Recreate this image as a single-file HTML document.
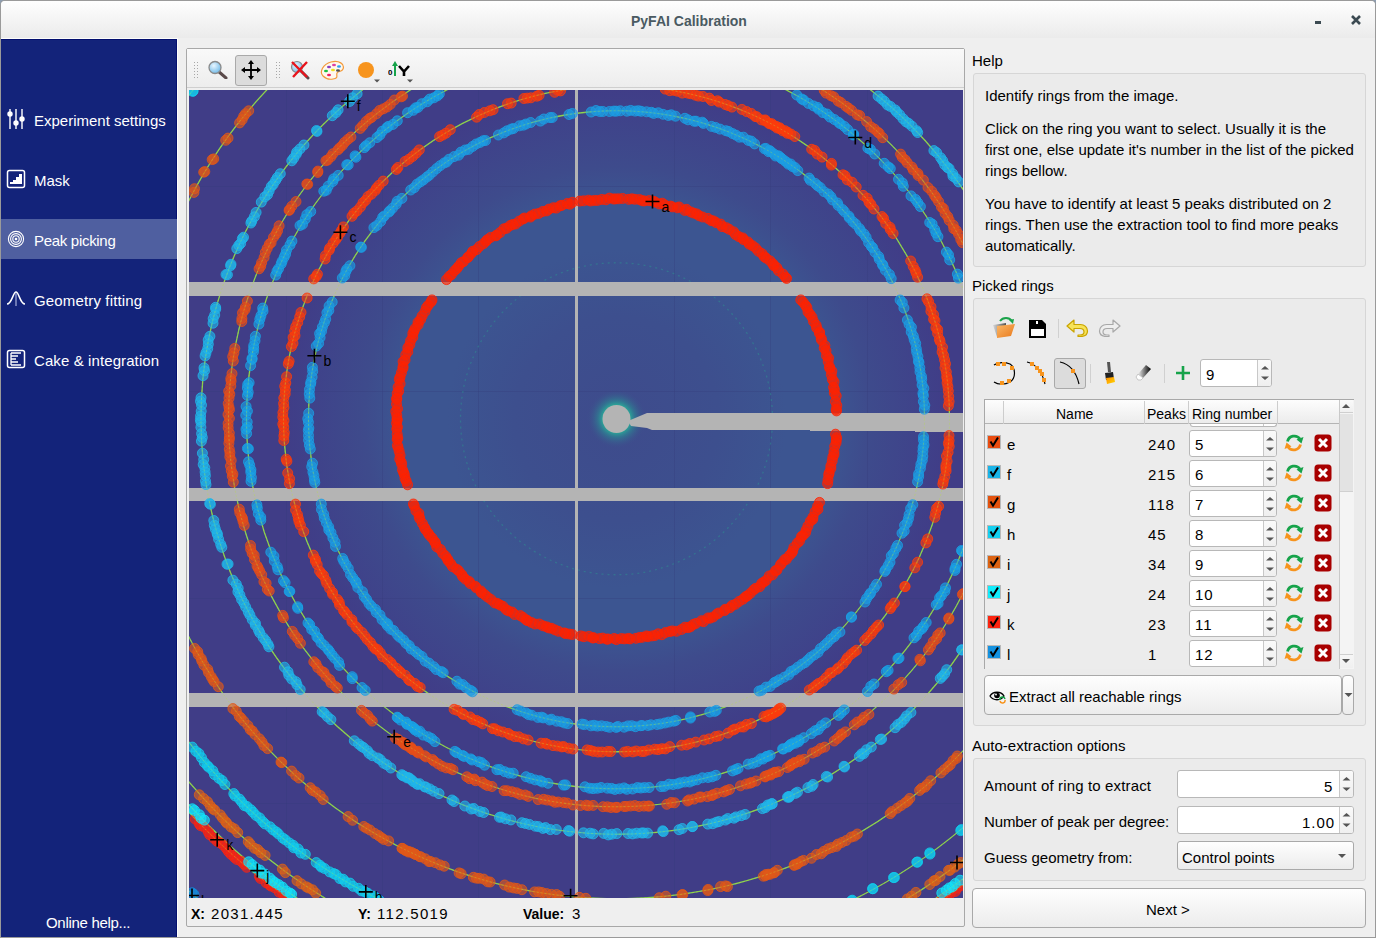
<!DOCTYPE html><html><head><meta charset="utf-8"><style>
*{box-sizing:border-box}
html,body{margin:0;padding:0}
body{width:1376px;height:938px;overflow:hidden;position:relative;background:#efefef;font-family:"Liberation Sans",sans-serif;}
.a{position:absolute}
.t{position:absolute;white-space:pre;font-family:"Liberation Sans",sans-serif}
.gb{position:absolute;background:#ebebeb;border:1px solid #d6d6d6;border-radius:3px}
.spin{position:absolute;background:#fff;border:1px solid #b8b8b8;border-radius:3px}
</style></head><body>
<div class="a" style="left:0;top:0;width:1376px;height:938px;background:#8e9db0"></div>
<div class="a" style="left:0;top:0;width:1376px;height:938px;background:#9a9a9a;border-radius:5px 5px 0 0"></div>
<div class="a" style="left:1px;top:1px;width:1374px;height:936px;background:#efefef;border-radius:4px 4px 0 0"></div>
<div class="a" style="left:1px;top:1px;width:1374px;height:37px;background:linear-gradient(#fefefe,#ebebeb);border-radius:4px 4px 0 0"></div>
<div class="t" style="left:631px;top:13px;font-size:14px;line-height:16px;color:#4a5a62;font-weight:bold">PyFAI Calibration</div>

<div class="a" style="left:1315px;top:21px;width:6px;height:3px;background:#3c4a52"></div>
<svg class="a" style="left:1350px;top:14px" width="12" height="12"><path d="M2 2L10 10M10 2L2 10" stroke="#3c4a52" stroke-width="2.6"/></svg>
<div class="a" style="left:1px;top:38px;width:177px;height:899px;background:#fdfdfb"></div>
<div class="a" style="left:1px;top:39px;width:176px;height:898px;background:#13237a;border-top:1px solid #030f6e;border-right:1px solid #030f6e"></div>
<div class="a" style="left:1px;top:219px;width:176px;height:40px;background:#4f5fa0"></div>
<div class="t" style="left:34px;top:112px;font-size:15px;line-height:17px;color:#ffffff;">Experiment settings</div>

<div class="t" style="left:34px;top:172px;font-size:15px;line-height:17px;color:#ffffff;">Mask</div>

<div class="t" style="left:34px;top:232px;font-size:15px;line-height:17px;color:#ffffff;letter-spacing:-0.3px">Peak picking</div>

<div class="t" style="left:34px;top:292px;font-size:15px;line-height:17px;color:#ffffff;letter-spacing:0.15px">Geometry fitting</div>

<div class="t" style="left:34px;top:352px;font-size:15px;line-height:17px;color:#ffffff;letter-spacing:0.1px">Cake &amp; integration</div>

<div class="t" style="left:46px;top:914px;font-size:15px;line-height:17px;color:#ffffff;letter-spacing:-0.3px">Online help...</div>

<svg class="a" style="left:6px;top:108px" width="20" height="22"><g stroke="#fff" stroke-width="1.4" fill="#fff"><path d="M4 1V21M10 1V21M16 1V21" fill="none"/><circle cx="4" cy="6" r="2"/><circle cx="10" cy="15" r="2"/><circle cx="16" cy="11" r="2"/></g></svg>
<svg class="a" style="left:6px;top:169px" width="20" height="20"><rect x="1.5" y="1.5" width="17" height="17" rx="2" fill="none" stroke="#fff" stroke-width="1.5"/><path d="M4 15H16V5H13V8H10V11H7V13H4Z" fill="#fff"/></svg>
<svg class="a" style="left:7px;top:230px" width="18" height="18"><g fill="none" stroke="#fff" stroke-width="1.1"><circle cx="9" cy="9" r="7.6"/><circle cx="9" cy="9" r="5.4"/><circle cx="9" cy="9" r="3.2"/></g><circle cx="9" cy="9" r="1.3" fill="#fff"/></svg>
<svg class="a" style="left:6px;top:290px" width="20" height="17"><path d="M1 14C6 14 7 2 10 2C13 2 14 14 19 14" fill="none" stroke="#fff" stroke-width="1.5"/><path d="M10 3V16" stroke="#8a94c8" stroke-width="1.5"/></svg>
<svg class="a" style="left:6px;top:349px" width="20" height="20"><rect x="1.5" y="1.5" width="17" height="17" rx="2" fill="none" stroke="#fff" stroke-width="1.5"/><path d="M5 4V16M5 4H15M5 7H12M5 10H10M5 13H12M5 16H15" stroke="#fff" stroke-width="1.3" fill="none"/></svg>
<div class="a" style="left:186px;top:48px;width:779px;height:879px;border:1px solid #a8a8a8;border-radius:2px;background:#efefef"></div>
<div class="a" style="left:187px;top:49px;width:777px;height:39px;background:linear-gradient(#f9f9f9,#ededed);border-bottom:1px solid #cfcfcf"></div>
<svg class="a" style="left:193px;top:61px" width="6" height="18"><g fill="#a8a8a8"><rect x="1" y="1" width="1" height="1"/><rect x="4" y="1" width="1" height="1"/><rect x="1" y="4" width="1" height="1"/><rect x="4" y="4" width="1" height="1"/><rect x="1" y="7" width="1" height="1"/><rect x="4" y="7" width="1" height="1"/><rect x="1" y="10" width="1" height="1"/><rect x="4" y="10" width="1" height="1"/><rect x="1" y="13" width="1" height="1"/><rect x="4" y="13" width="1" height="1"/><rect x="1" y="16" width="1" height="1"/><rect x="4" y="16" width="1" height="1"/></g></svg>
<svg class="a" style="left:275px;top:61px" width="6" height="18"><g fill="#a8a8a8"><rect x="1" y="1" width="1" height="1"/><rect x="4" y="1" width="1" height="1"/><rect x="1" y="4" width="1" height="1"/><rect x="4" y="4" width="1" height="1"/><rect x="1" y="7" width="1" height="1"/><rect x="4" y="7" width="1" height="1"/><rect x="1" y="10" width="1" height="1"/><rect x="4" y="10" width="1" height="1"/><rect x="1" y="13" width="1" height="1"/><rect x="4" y="13" width="1" height="1"/><rect x="1" y="16" width="1" height="1"/><rect x="4" y="16" width="1" height="1"/></g></svg>
<svg class="a" style="left:207px;top:60px" width="21" height="19" viewBox="0 0 21 19"><defs><radialGradient id="mg" cx="0.4" cy="0.35" r="0.7"><stop offset="0" stop-color="#e8f6ff"/><stop offset="1" stop-color="#6cb8e8"/></radialGradient></defs><path d="M11 11L19 18" stroke="#5a4a4a" stroke-width="3" stroke-linecap="round"/><circle cx="8" cy="7.5" r="6" fill="url(#mg)" stroke="#8a8a8a" stroke-width="1.3"/></svg>
<div class="a" style="left:235px;top:55px;width:32px;height:31px;background:#dcdcdc;border:1px solid #a9a9a9;border-radius:3px"></div>
<svg class="a" style="left:241px;top:60px" width="20" height="20" viewBox="0 0 20 20"><path d="M10 2V18M2 10H18" stroke="#000" stroke-width="1.8"/><path d="M10 0L13 4H7ZM10 20L13 16H7ZM0 10L4 7V13ZM20 10L16 7V13Z" fill="#000"/></svg>
<svg class="a" style="left:290px;top:60px" width="20" height="20" viewBox="0 0 20 20"><defs><radialGradient id="mg2" cx="0.4" cy="0.35" r="0.7"><stop offset="0" stop-color="#e8f6ff"/><stop offset="1" stop-color="#6cb8e8"/></radialGradient></defs><path d="M10 10L18 18" stroke="#5a4a4a" stroke-width="3" stroke-linecap="round"/><circle cx="7" cy="7" r="5.5" fill="url(#mg2)" stroke="#8a8a8a" stroke-width="1.2"/><path d="M2 2L17 17M17 2L3 17" stroke="#e8141c" stroke-width="2.4"/></svg>
<svg class="a" style="left:320px;top:60px" width="25" height="20" viewBox="0 0 25 20"><path d="M3 16C-1 12 3 4 11 2C19 0 25 4 23 9C22 12 18 11 17 13C16 16 19 18 13 19C8 20 5 18 3 16Z" fill="#fff8ee" stroke="#f39a3a" stroke-width="1.2"/><ellipse cx="9" cy="7" rx="2" ry="1.2" fill="#8a3fc0"/><ellipse cx="14" cy="5" rx="2" ry="1.2" fill="#e040a0"/><ellipse cx="19" cy="6.5" rx="2" ry="1.2" fill="#30a0f0"/><ellipse cx="13" cy="10" rx="2" ry="1.2" fill="#f0e020"/><ellipse cx="6" cy="11" rx="2" ry="1.2" fill="#20c040"/><ellipse cx="9" cy="15" rx="2" ry="1.2" fill="#f02060"/><ellipse cx="18" cy="10.5" rx="2" ry="1.2" fill="#505050"/></svg>
<svg class="a" style="left:357px;top:61px" width="25" height="23"><circle cx="9" cy="9" r="8" fill="#f7941d"/><path d="M17 18.5H23L20 21.5Z" fill="#555"/></svg>
<svg class="a" style="left:388px;top:61px" width="26" height="23" viewBox="0 0 26 23"><path d="M7 15V4" stroke="#16a34a" stroke-width="2"/><path d="M7 0L10 5H4Z" fill="#16a34a"/><text x="0" y="14" font-family="Liberation Sans" font-size="8" font-weight="bold" fill="#000">0</text><path d="M11 5L16 10.5L21 5M16 10.5V15" fill="none" stroke="#000" stroke-width="2.6"/><path d="M19 18.5H25L22 21.5Z" fill="#555"/></svg>
<svg class="a" style="left:189px;top:90px" width="774" height="808" viewBox="189 90 774 808"><defs><radialGradient id="cg" cx="616.5" cy="418.75" r="340" gradientUnits="userSpaceOnUse"><stop offset="0" stop-color="#3e4b8c"/><stop offset="0.3" stop-color="#3d4f8e"/><stop offset="0.5" stop-color="#3c5591"/><stop offset="0.64" stop-color="#3c5591"/><stop offset="0.74" stop-color="#3e4b8c"/><stop offset="0.9" stop-color="#3f428a"/><stop offset="1" stop-color="#403d87" stop-opacity="0"/></radialGradient><radialGradient id="bg2" cx="616.5" cy="418.75" r="30" gradientUnits="userSpaceOnUse"><stop offset="0.46" stop-color="#2aa898" stop-opacity="0.95"/><stop offset="0.62" stop-color="#2b8c94" stop-opacity="0.6"/><stop offset="1" stop-color="#3e4b8c" stop-opacity="0"/></radialGradient></defs><rect x="189" y="90" width="774" height="808" fill="#403d87"/><rect x="189" y="90" width="774" height="808" fill="url(#cg)"/><circle cx="616.5" cy="418.75" r="30" fill="url(#bg2)"/><g fill="#363a7c" fill-opacity="0.3"><rect x="286" y="90" width="1" height="808"/><rect x="382" y="90" width="1" height="808"/><rect x="478" y="90" width="1" height="808"/><rect x="674" y="90" width="1" height="808"/><rect x="770" y="90" width="1" height="808"/><rect x="867" y="90" width="1" height="808"/><rect x="189" y="186" width="774" height="1"/><rect x="189" y="391" width="774" height="1"/><rect x="189" y="598" width="774" height="1"/><rect x="189" y="803" width="774" height="1"/></g><circle cx="616.5" cy="418.75" r="156" fill="none" stroke="#2aa090" stroke-width="1.3" stroke-opacity="0.4" stroke-dasharray="2 4"/><circle cx="616.5" cy="418.75" r="308" fill="none" stroke="#8ede4a" stroke-width="1.3" stroke-opacity="0.9"/><circle cx="616.5" cy="418.75" r="333" fill="none" stroke="#8ede4a" stroke-width="1.3" stroke-opacity="0.9"/><circle cx="616.5" cy="418.75" r="370" fill="none" stroke="#8ede4a" stroke-width="1.3" stroke-opacity="0.9"/><circle cx="616.5" cy="418.75" r="388" fill="none" stroke="#8ede4a" stroke-width="1.3" stroke-opacity="0.9"/><circle cx="616.5" cy="418.75" r="415.5" fill="none" stroke="#8ede4a" stroke-width="1.3" stroke-opacity="0.9"/><circle cx="616.5" cy="418.75" r="480" fill="none" stroke="#8ede4a" stroke-width="1.3" stroke-opacity="0.9"/><circle cx="616.5" cy="418.75" r="536" fill="none" stroke="#8ede4a" stroke-width="1.3" stroke-opacity="0.9"/><circle cx="616.5" cy="418.75" r="561" fill="none" stroke="#8ede4a" stroke-width="1.3" stroke-opacity="0.9"/><circle cx="616.5" cy="418.75" r="576" fill="none" stroke="#8ede4a" stroke-width="1.3" stroke-opacity="0.9"/><circle cx="616.5" cy="418.75" r="581" fill="none" stroke="#8ede4a" stroke-width="1.3" stroke-opacity="0.9"/><circle cx="616.5" cy="418.75" r="637" fill="none" stroke="#8ede4a" stroke-width="1.3" stroke-opacity="0.9"/><rect x="575" y="90" width="3" height="808" fill="#b4b4b4"/><rect x="189" y="282" width="774" height="14" fill="#b4b4b4"/><rect x="189" y="488" width="774" height="13" fill="#b4b4b4"/><rect x="189" y="693" width="774" height="14" fill="#b4b4b4"/><circle cx="616.5" cy="419" r="14" fill="#b4b4b4"/><path d="M628 421L647 413H963V432H915V431H810V430H652L647 428L631 426Z" fill="#b4b4b4"/><g fill="#1290e0" fill-opacity="0.62" stroke="#1290e0" stroke-opacity="0.8" stroke-width="1"><circle cx="193.9" cy="894.4" r="5.0"/><circle cx="192.1" cy="892.8" r="5.0"/></g><g fill="#fa2412" fill-opacity="0.62" stroke="#fa2412" stroke-opacity="0.8" stroke-width="1"><circle cx="195.2" cy="819.0" r="5.0"/><circle cx="199.1" cy="823.6" r="5.0"/><circle cx="200.5" cy="825.6" r="5.0"/><circle cx="204.3" cy="827.2" r="5.0"/><circle cx="208.3" cy="831.9" r="5.0"/><circle cx="209.7" cy="834.7" r="5.0"/><circle cx="213.8" cy="838.3" r="5.0"/><circle cx="217.0" cy="841.3" r="5.0"/><circle cx="220.0" cy="842.8" r="5.0"/><circle cx="222.9" cy="844.9" r="5.0"/><circle cx="226.4" cy="848.6" r="5.0"/><circle cx="228.6" cy="851.8" r="5.0"/><circle cx="231.0" cy="854.4" r="5.0"/><circle cx="234.3" cy="857.3" r="5.0"/><circle cx="236.7" cy="859.4" r="5.0"/><circle cx="241.1" cy="861.4" r="5.0"/><circle cx="244.0" cy="864.3" r="5.0"/><circle cx="246.7" cy="867.3" r="5.0"/><circle cx="259.3" cy="876.1" r="5.0"/><circle cx="260.6" cy="878.5" r="5.0"/><circle cx="266.1" cy="882.7" r="5.0"/><circle cx="269.5" cy="885.0" r="5.0"/><circle cx="271.2" cy="886.1" r="5.0"/><circle cx="274.8" cy="887.8" r="5.0"/><circle cx="279.2" cy="892.2" r="5.0"/><circle cx="282.7" cy="893.6" r="5.0"/><circle cx="285.2" cy="896.7" r="5.0"/><circle cx="941.5" cy="900.6" r="5.0"/><circle cx="944.2" cy="898.2" r="5.0"/><circle cx="947.0" cy="896.0" r="5.0"/><circle cx="950.4" cy="893.6" r="5.0"/><circle cx="955.2" cy="891.5" r="5.0"/><circle cx="957.2" cy="888.3" r="5.0"/><circle cx="961.3" cy="885.3" r="5.0"/></g><g fill="#12e4fa" fill-opacity="0.62" stroke="#12e4fa" stroke-opacity="0.8" stroke-width="1"><circle cx="192.3" cy="808.8" r="5.0"/><circle cx="194.5" cy="810.4" r="5.0"/><circle cx="199.4" cy="814.7" r="5.0"/><circle cx="201.0" cy="818.2" r="5.0"/><circle cx="204.4" cy="820.1" r="5.0"/><circle cx="248.7" cy="861.8" r="5.0"/><circle cx="252.1" cy="864.6" r="5.0"/><circle cx="255.5" cy="867.7" r="5.0"/><circle cx="259.8" cy="870.1" r="5.0"/><circle cx="261.3" cy="873.1" r="5.0"/><circle cx="264.8" cy="874.0" r="5.0"/><circle cx="269.8" cy="878.1" r="5.0"/><circle cx="272.5" cy="880.8" r="5.0"/><circle cx="275.2" cy="882.7" r="5.0"/><circle cx="278.8" cy="884.7" r="5.0"/><circle cx="282.5" cy="887.1" r="5.0"/><circle cx="286.4" cy="891.0" r="5.0"/><circle cx="290.1" cy="893.1" r="5.0"/><circle cx="291.6" cy="894.2" r="5.0"/><circle cx="941.8" cy="893.0" r="5.0"/><circle cx="946.3" cy="890.2" r="5.0"/><circle cx="949.3" cy="887.9" r="5.0"/><circle cx="952.3" cy="886.8" r="5.0"/><circle cx="955.2" cy="883.6" r="5.0"/><circle cx="960.1" cy="880.2" r="5.0"/></g><g fill="#de6216" fill-opacity="0.62" stroke="#de6216" stroke-opacity="0.8" stroke-width="1"><circle cx="199.3" cy="794.8" r="5.0"/><circle cx="203.6" cy="798.6" r="5.0"/><circle cx="207.5" cy="801.8" r="5.0"/><circle cx="210.3" cy="805.9" r="5.0"/><circle cx="213.0" cy="809.0" r="5.0"/><circle cx="214.7" cy="810.1" r="5.0"/><circle cx="220.2" cy="814.8" r="5.0"/><circle cx="222.5" cy="818.0" r="5.0"/><circle cx="225.7" cy="821.8" r="5.0"/><circle cx="226.8" cy="823.2" r="5.0"/><circle cx="231.0" cy="827.0" r="5.0"/><circle cx="234.3" cy="828.8" r="5.0"/><circle cx="237.7" cy="832.6" r="5.0"/><circle cx="248.3" cy="841.7" r="5.0"/><circle cx="250.2" cy="844.0" r="5.0"/><circle cx="254.6" cy="848.3" r="5.0"/><circle cx="257.8" cy="849.6" r="5.0"/><circle cx="260.9" cy="852.8" r="5.0"/><circle cx="265.1" cy="855.4" r="5.0"/><circle cx="282.5" cy="869.1" r="5.0"/><circle cx="285.3" cy="872.6" r="5.0"/><circle cx="297.0" cy="880.7" r="5.0"/><circle cx="301.2" cy="883.8" r="5.0"/><circle cx="306.3" cy="886.8" r="5.0"/><circle cx="308.5" cy="888.0" r="5.0"/><circle cx="312.5" cy="889.8" r="5.0"/><circle cx="315.7" cy="893.2" r="5.0"/><circle cx="907.3" cy="899.0" r="5.0"/><circle cx="911.5" cy="896.2" r="5.0"/><circle cx="915.9" cy="892.4" r="5.0"/><circle cx="929.8" cy="884.5" r="5.0"/><circle cx="934.0" cy="880.8" r="5.0"/><circle cx="935.6" cy="880.4" r="5.0"/><circle cx="940.0" cy="876.6" r="5.0"/><circle cx="948.6" cy="870.3" r="5.0"/><circle cx="950.0" cy="870.3" r="5.0"/><circle cx="954.6" cy="867.1" r="5.0"/><circle cx="958.2" cy="864.1" r="5.0"/><circle cx="960.8" cy="862.5" r="5.0"/></g><g fill="#12cdee" fill-opacity="0.62" stroke="#12cdee" stroke-opacity="0.8" stroke-width="1"><circle cx="193.1" cy="90.7" r="5.0"/><circle cx="192.8" cy="91.4" r="5.0"/><circle cx="192.3" cy="747.1" r="5.0"/><circle cx="195.9" cy="751.3" r="5.0"/><circle cx="198.9" cy="753.5" r="5.0"/><circle cx="201.5" cy="757.7" r="5.0"/><circle cx="204.3" cy="762.5" r="5.0"/><circle cx="207.4" cy="765.8" r="5.0"/><circle cx="208.8" cy="767.3" r="5.0"/><circle cx="212.8" cy="770.7" r="5.0"/><circle cx="214.5" cy="774.6" r="5.0"/><circle cx="218.8" cy="778.2" r="5.0"/><circle cx="222.1" cy="780.5" r="5.0"/><circle cx="224.9" cy="784.5" r="5.0"/><circle cx="233.8" cy="793.6" r="5.0"/><circle cx="235.1" cy="795.9" r="5.0"/><circle cx="239.5" cy="799.1" r="5.0"/><circle cx="241.7" cy="802.0" r="5.0"/><circle cx="244.3" cy="805.6" r="5.0"/><circle cx="247.0" cy="806.5" r="5.0"/><circle cx="250.9" cy="809.8" r="5.0"/><circle cx="253.1" cy="812.3" r="5.0"/><circle cx="256.0" cy="815.5" r="5.0"/><circle cx="259.7" cy="818.0" r="5.0"/><circle cx="262.8" cy="821.7" r="5.0"/><circle cx="264.9" cy="823.9" r="5.0"/><circle cx="270.0" cy="826.8" r="5.0"/><circle cx="273.1" cy="829.9" r="5.0"/><circle cx="276.4" cy="832.0" r="5.0"/><circle cx="278.5" cy="834.0" r="5.0"/><circle cx="282.8" cy="838.1" r="5.0"/><circle cx="285.3" cy="839.8" r="5.0"/><circle cx="289.3" cy="842.9" r="5.0"/><circle cx="293.2" cy="845.3" r="5.0"/><circle cx="293.8" cy="847.8" r="5.0"/><circle cx="298.1" cy="849.0" r="5.0"/><circle cx="300.9" cy="853.0" r="5.0"/><circle cx="305.3" cy="854.3" r="5.0"/><circle cx="316.2" cy="862.6" r="5.0"/><circle cx="319.9" cy="865.3" r="5.0"/><circle cx="321.4" cy="867.1" r="5.0"/><circle cx="324.5" cy="868.5" r="5.0"/><circle cx="329.6" cy="871.9" r="5.0"/><circle cx="333.8" cy="873.6" r="5.0"/><circle cx="335.9" cy="874.5" r="5.0"/><circle cx="339.9" cy="878.6" r="5.0"/><circle cx="343.2" cy="879.2" r="5.0"/><circle cx="345.4" cy="881.9" r="5.0"/><circle cx="350.0" cy="883.1" r="5.0"/><circle cx="353.1" cy="886.3" r="5.0"/><circle cx="358.6" cy="888.3" r="5.0"/><circle cx="361.5" cy="890.9" r="5.0"/><circle cx="364.9" cy="891.8" r="5.0"/><circle cx="367.8" cy="893.3" r="5.0"/><circle cx="373.7" cy="896.1" r="5.0"/><circle cx="375.6" cy="897.7" r="5.0"/><circle cx="378.9" cy="899.9" r="5.0"/><circle cx="852.3" cy="900.2" r="5.0"/><circle cx="851.4" cy="900.9" r="5.0"/><circle cx="872.9" cy="888.7" r="5.0"/><circle cx="872.6" cy="888.7" r="5.0"/><circle cx="893.5" cy="877.6" r="5.0"/><circle cx="894.4" cy="877.5" r="5.0"/><circle cx="917.6" cy="862.0" r="5.0"/><circle cx="916.8" cy="862.2" r="5.0"/><circle cx="930.0" cy="854.1" r="5.0"/><circle cx="929.8" cy="852.9" r="5.0"/><circle cx="961.5" cy="829.6" r="5.0"/><circle cx="960.7" cy="830.6" r="5.0"/></g><g fill="#e05818" fill-opacity="0.62" stroke="#e05818" stroke-opacity="0.8" stroke-width="1"><circle cx="248.7" cy="110.8" r="5.0"/><circle cx="245.6" cy="113.7" r="5.0"/><circle cx="243.7" cy="116.2" r="5.0"/><circle cx="242.2" cy="119.6" r="5.0"/><circle cx="239.6" cy="122.9" r="5.0"/><circle cx="228.0" cy="138.1" r="5.0"/><circle cx="225.7" cy="140.3" r="5.0"/><circle cx="213.7" cy="158.9" r="5.0"/><circle cx="212.2" cy="159.6" r="5.0"/><circle cx="204.8" cy="171.6" r="5.0"/><circle cx="203.7" cy="172.2" r="5.0"/><circle cx="194.5" cy="188.7" r="5.0"/><circle cx="193.9" cy="192.4" r="5.0"/><circle cx="194.6" cy="648.4" r="5.0"/><circle cx="197.7" cy="651.7" r="5.0"/><circle cx="198.2" cy="654.6" r="5.0"/><circle cx="201.2" cy="658.6" r="5.0"/><circle cx="201.9" cy="661.1" r="5.0"/><circle cx="203.9" cy="665.1" r="5.0"/><circle cx="207.7" cy="669.3" r="5.0"/><circle cx="208.5" cy="672.4" r="5.0"/><circle cx="211.2" cy="676.7" r="5.0"/><circle cx="212.8" cy="679.5" r="5.0"/><circle cx="214.1" cy="681.6" r="5.0"/><circle cx="218.3" cy="686.7" r="5.0"/><circle cx="232.9" cy="708.6" r="5.0"/><circle cx="236.3" cy="711.2" r="5.0"/><circle cx="239.3" cy="716.5" r="5.0"/><circle cx="241.0" cy="718.0" r="5.0"/><circle cx="243.8" cy="721.2" r="5.0"/><circle cx="247.9" cy="725.5" r="5.0"/><circle cx="250.3" cy="729.7" r="5.0"/><circle cx="252.3" cy="730.9" r="5.0"/><circle cx="255.0" cy="734.5" r="5.0"/><circle cx="259.4" cy="738.8" r="5.0"/><circle cx="262.0" cy="742.0" r="5.0"/><circle cx="263.9" cy="745.6" r="5.0"/><circle cx="267.6" cy="748.6" r="5.0"/><circle cx="281.0" cy="762.1" r="5.0"/><circle cx="281.8" cy="762.6" r="5.0"/><circle cx="291.6" cy="771.1" r="5.0"/><circle cx="295.7" cy="775.5" r="5.0"/><circle cx="299.0" cy="778.0" r="5.0"/><circle cx="310.2" cy="787.7" r="5.0"/><circle cx="312.4" cy="790.5" r="5.0"/><circle cx="315.6" cy="791.9" r="5.0"/><circle cx="320.2" cy="795.5" r="5.0"/><circle cx="323.2" cy="799.5" r="5.0"/><circle cx="348.1" cy="816.6" r="5.0"/><circle cx="352.6" cy="820.3" r="5.0"/><circle cx="363.8" cy="826.5" r="5.0"/><circle cx="366.5" cy="828.2" r="5.0"/><circle cx="370.0" cy="830.0" r="5.0"/><circle cx="374.9" cy="833.5" r="5.0"/><circle cx="378.6" cy="835.6" r="5.0"/><circle cx="381.4" cy="837.7" r="5.0"/><circle cx="383.8" cy="839.4" r="5.0"/><circle cx="388.6" cy="840.9" r="5.0"/><circle cx="402.2" cy="848.5" r="5.0"/><circle cx="405.7" cy="850.7" r="5.0"/><circle cx="408.3" cy="851.3" r="5.0"/><circle cx="411.3" cy="852.2" r="5.0"/><circle cx="415.1" cy="854.2" r="5.0"/><circle cx="419.4" cy="856.5" r="5.0"/><circle cx="402.1" cy="848.3" r="5.0"/><circle cx="404.4" cy="849.7" r="5.0"/><circle cx="408.6" cy="852.1" r="5.0"/><circle cx="413.7" cy="853.6" r="5.0"/><circle cx="415.6" cy="854.5" r="5.0"/><circle cx="420.9" cy="856.9" r="5.0"/><circle cx="425.3" cy="858.8" r="5.0"/><circle cx="429.0" cy="861.6" r="5.0"/><circle cx="430.4" cy="861.4" r="5.0"/><circle cx="435.3" cy="862.7" r="5.0"/><circle cx="440.0" cy="864.9" r="5.0"/><circle cx="444.2" cy="866.2" r="5.0"/><circle cx="459.1" cy="872.9" r="5.0"/><circle cx="461.2" cy="873.7" r="5.0"/><circle cx="473.4" cy="877.3" r="5.0"/><circle cx="476.5" cy="878.2" r="5.0"/><circle cx="479.2" cy="878.3" r="5.0"/><circle cx="483.7" cy="879.1" r="5.0"/><circle cx="487.6" cy="881.8" r="5.0"/><circle cx="490.1" cy="882.0" r="5.0"/><circle cx="504.6" cy="885.0" r="5.0"/><circle cx="509.3" cy="887.1" r="5.0"/><circle cx="513.4" cy="887.9" r="5.0"/><circle cx="516.9" cy="888.4" r="5.0"/><circle cx="521.9" cy="889.7" r="5.0"/><circle cx="534.6" cy="891.9" r="5.0"/><circle cx="538.6" cy="891.9" r="5.0"/><circle cx="541.9" cy="892.5" r="5.0"/><circle cx="546.5" cy="893.6" r="5.0"/><circle cx="551.4" cy="894.4" r="5.0"/><circle cx="556.6" cy="894.5" r="5.0"/><circle cx="559.4" cy="896.1" r="5.0"/><circle cx="579.3" cy="897.3" r="5.0"/><circle cx="585.8" cy="898.3" r="5.0"/><circle cx="659.3" cy="897.7" r="5.0"/><circle cx="665.8" cy="896.2" r="5.0"/><circle cx="682.0" cy="894.8" r="5.0"/><circle cx="682.8" cy="894.6" r="5.0"/><circle cx="708.1" cy="889.4" r="5.0"/><circle cx="707.8" cy="890.6" r="5.0"/><circle cx="720.6" cy="886.6" r="5.0"/><circle cx="725.5" cy="885.9" r="5.0"/><circle cx="727.4" cy="886.6" r="5.0"/><circle cx="763.4" cy="876.2" r="5.0"/><circle cx="765.4" cy="875.7" r="5.0"/><circle cx="770.2" cy="874.3" r="5.0"/><circle cx="774.1" cy="872.8" r="5.0"/><circle cx="794.6" cy="864.7" r="5.0"/><circle cx="797.2" cy="864.1" r="5.0"/><circle cx="765.9" cy="874.5" r="5.0"/><circle cx="768.3" cy="874.2" r="5.0"/><circle cx="774.0" cy="872.7" r="5.0"/><circle cx="777.3" cy="870.3" r="5.0"/><circle cx="794.1" cy="865.4" r="5.0"/><circle cx="797.5" cy="863.8" r="5.0"/><circle cx="801.0" cy="861.5" r="5.0"/><circle cx="803.5" cy="860.4" r="5.0"/><circle cx="811.4" cy="858.3" r="5.0"/><circle cx="816.5" cy="854.5" r="5.0"/><circle cx="821.2" cy="853.8" r="5.0"/><circle cx="823.9" cy="851.3" r="5.0"/><circle cx="828.1" cy="848.8" r="5.0"/><circle cx="831.8" cy="847.6" r="5.0"/><circle cx="836.4" cy="846.4" r="5.0"/><circle cx="837.8" cy="844.1" r="5.0"/><circle cx="842.0" cy="842.4" r="5.0"/><circle cx="846.0" cy="840.6" r="5.0"/><circle cx="851.1" cy="837.1" r="5.0"/><circle cx="854.4" cy="836.2" r="5.0"/><circle cx="857.4" cy="834.0" r="5.0"/><circle cx="890.2" cy="813.6" r="5.0"/><circle cx="891.9" cy="811.6" r="5.0"/><circle cx="897.2" cy="808.2" r="5.0"/><circle cx="901.0" cy="805.6" r="5.0"/><circle cx="905.3" cy="802.8" r="5.0"/><circle cx="907.6" cy="801.1" r="5.0"/><circle cx="909.8" cy="798.4" r="5.0"/><circle cx="919.6" cy="790.4" r="5.0"/><circle cx="921.6" cy="788.3" r="5.0"/><circle cx="925.0" cy="787.1" r="5.0"/><circle cx="927.1" cy="784.5" r="5.0"/><circle cx="930.7" cy="780.7" r="5.0"/><circle cx="940.9" cy="772.9" r="5.0"/><circle cx="944.3" cy="769.7" r="5.0"/><circle cx="948.0" cy="766.6" r="5.0"/><circle cx="950.2" cy="764.9" r="5.0"/><circle cx="953.0" cy="760.6" r="5.0"/><circle cx="956.4" cy="758.4" r="5.0"/><circle cx="957.3" cy="756.0" r="5.0"/></g><g fill="#20b6ea" fill-opacity="0.62" stroke="#20b6ea" stroke-opacity="0.8" stroke-width="1"><circle cx="357.1" cy="93.8" r="5.0"/><circle cx="352.5" cy="97.8" r="5.0"/><circle cx="349.5" cy="101.5" r="5.0"/><circle cx="338.1" cy="109.8" r="5.0"/><circle cx="336.0" cy="112.6" r="5.0"/><circle cx="332.3" cy="115.7" r="5.0"/><circle cx="316.5" cy="130.5" r="5.0"/><circle cx="317.0" cy="131.4" r="5.0"/><circle cx="303.9" cy="145.0" r="5.0"/><circle cx="299.9" cy="149.0" r="5.0"/><circle cx="296.7" cy="152.1" r="5.0"/><circle cx="296.3" cy="154.2" r="5.0"/><circle cx="293.7" cy="158.1" r="5.0"/><circle cx="291.8" cy="160.8" r="5.0"/><circle cx="280.3" cy="173.7" r="5.0"/><circle cx="277.3" cy="177.6" r="5.0"/><circle cx="275.6" cy="180.5" r="5.0"/><circle cx="273.2" cy="184.4" r="5.0"/><circle cx="271.3" cy="186.4" r="5.0"/><circle cx="269.1" cy="190.9" r="5.0"/><circle cx="267.5" cy="194.7" r="5.0"/><circle cx="264.8" cy="196.9" r="5.0"/><circle cx="261.3" cy="202.1" r="5.0"/><circle cx="256.1" cy="212.4" r="5.0"/><circle cx="254.4" cy="216.8" r="5.0"/><circle cx="251.7" cy="221.1" r="5.0"/><circle cx="250.9" cy="223.0" r="5.0"/><circle cx="243.5" cy="237.2" r="5.0"/><circle cx="242.3" cy="238.7" r="5.0"/><circle cx="240.6" cy="243.5" r="5.0"/><circle cx="238.8" cy="245.4" r="5.0"/><circle cx="236.8" cy="248.6" r="5.0"/><circle cx="230.6" cy="265.7" r="5.0"/><circle cx="231.0" cy="264.3" r="5.0"/><circle cx="226.0" cy="274.5" r="5.0"/><circle cx="227.4" cy="274.8" r="5.0"/><circle cx="878.1" cy="96.1" r="5.0"/><circle cx="881.6" cy="99.0" r="5.0"/><circle cx="884.4" cy="101.3" r="5.0"/><circle cx="887.5" cy="105.0" r="5.0"/><circle cx="890.4" cy="106.4" r="5.0"/><circle cx="895.2" cy="109.9" r="5.0"/><circle cx="896.6" cy="112.0" r="5.0"/><circle cx="899.6" cy="114.7" r="5.0"/><circle cx="903.0" cy="118.7" r="5.0"/><circle cx="906.0" cy="121.8" r="5.0"/><circle cx="908.7" cy="123.4" r="5.0"/><circle cx="912.0" cy="126.3" r="5.0"/><circle cx="916.6" cy="130.7" r="5.0"/><circle cx="917.7" cy="132.5" r="5.0"/><circle cx="933.9" cy="150.6" r="5.0"/><circle cx="936.6" cy="152.6" r="5.0"/><circle cx="940.7" cy="157.8" r="5.0"/><circle cx="942.7" cy="160.7" r="5.0"/><circle cx="944.7" cy="164.8" r="5.0"/><circle cx="947.5" cy="167.6" r="5.0"/><circle cx="949.1" cy="168.5" r="5.0"/><circle cx="952.7" cy="173.7" r="5.0"/><circle cx="953.0" cy="176.3" r="5.0"/><circle cx="956.0" cy="178.4" r="5.0"/><circle cx="958.7" cy="181.9" r="5.0"/><circle cx="215.6" cy="307.3" r="5.0"/><circle cx="215.7" cy="309.1" r="5.0"/><circle cx="214.7" cy="315.0" r="5.0"/><circle cx="213.2" cy="318.6" r="5.0"/><circle cx="213.0" cy="323.2" r="5.0"/><circle cx="209.9" cy="336.3" r="5.0"/><circle cx="208.2" cy="340.0" r="5.0"/><circle cx="208.3" cy="344.2" r="5.0"/><circle cx="207.7" cy="348.7" r="5.0"/><circle cx="206.0" cy="352.8" r="5.0"/><circle cx="205.1" cy="355.9" r="5.0"/><circle cx="204.0" cy="367.9" r="5.0"/><circle cx="204.5" cy="370.8" r="5.0"/><circle cx="203.0" cy="375.7" r="5.0"/><circle cx="201.0" cy="397.8" r="5.0"/><circle cx="200.5" cy="401.2" r="5.0"/><circle cx="201.5" cy="405.1" r="5.0"/><circle cx="201.2" cy="411.2" r="5.0"/><circle cx="200.6" cy="416.0" r="5.0"/><circle cx="200.4" cy="419.7" r="5.0"/><circle cx="200.8" cy="421.9" r="5.0"/><circle cx="200.9" cy="427.3" r="5.0"/><circle cx="201.6" cy="433.6" r="5.0"/><circle cx="202.3" cy="437.5" r="5.0"/><circle cx="201.4" cy="441.1" r="5.0"/><circle cx="202.4" cy="453.2" r="5.0"/><circle cx="203.7" cy="459.5" r="5.0"/><circle cx="203.2" cy="464.5" r="5.0"/><circle cx="204.8" cy="467.7" r="5.0"/><circle cx="205.1" cy="472.0" r="5.0"/><circle cx="205.4" cy="475.6" r="5.0"/><circle cx="205.5" cy="481.1" r="5.0"/><circle cx="206.0" cy="484.6" r="5.0"/><circle cx="209.7" cy="503.5" r="5.0"/><circle cx="210.4" cy="504.3" r="5.0"/><circle cx="213.8" cy="520.5" r="5.0"/><circle cx="214.3" cy="525.3" r="5.0"/><circle cx="215.3" cy="528.9" r="5.0"/><circle cx="217.0" cy="533.0" r="5.0"/><circle cx="217.5" cy="534.8" r="5.0"/><circle cx="218.6" cy="539.2" r="5.0"/><circle cx="220.7" cy="544.3" r="5.0"/><circle cx="221.8" cy="547.3" r="5.0"/><circle cx="227.0" cy="564.2" r="5.0"/><circle cx="228.1" cy="564.0" r="5.0"/><circle cx="232.9" cy="580.2" r="5.0"/><circle cx="236.3" cy="584.2" r="5.0"/><circle cx="238.2" cy="588.4" r="5.0"/><circle cx="237.9" cy="591.8" r="5.0"/><circle cx="239.9" cy="595.0" r="5.0"/><circle cx="241.6" cy="599.5" r="5.0"/><circle cx="243.9" cy="603.1" r="5.0"/><circle cx="245.7" cy="607.1" r="5.0"/><circle cx="248.3" cy="611.9" r="5.0"/><circle cx="249.9" cy="615.0" r="5.0"/><circle cx="252.3" cy="619.8" r="5.0"/><circle cx="255.4" cy="623.2" r="5.0"/><circle cx="255.3" cy="625.1" r="5.0"/><circle cx="258.5" cy="630.1" r="5.0"/><circle cx="259.8" cy="632.9" r="5.0"/><circle cx="263.2" cy="637.7" r="5.0"/><circle cx="265.6" cy="640.6" r="5.0"/><circle cx="267.9" cy="644.2" r="5.0"/><circle cx="268.9" cy="646.8" r="5.0"/><circle cx="284.5" cy="667.2" r="5.0"/><circle cx="288.0" cy="671.8" r="5.0"/><circle cx="288.8" cy="675.2" r="5.0"/><circle cx="291.7" cy="679.1" r="5.0"/><circle cx="295.9" cy="681.7" r="5.0"/><circle cx="296.9" cy="684.6" r="5.0"/><circle cx="300.2" cy="689.5" r="5.0"/><circle cx="961.9" cy="649.9" r="5.0"/><circle cx="961.7" cy="649.9" r="5.0"/><circle cx="946.7" cy="669.7" r="5.0"/><circle cx="944.6" cy="673.9" r="5.0"/><circle cx="942.2" cy="676.5" r="5.0"/><circle cx="940.3" cy="678.4" r="5.0"/><circle cx="322.2" cy="711.8" r="5.0"/><circle cx="324.0" cy="713.0" r="5.0"/><circle cx="327.3" cy="716.6" r="5.0"/><circle cx="330.9" cy="719.6" r="5.0"/><circle cx="354.3" cy="740.8" r="5.0"/><circle cx="358.6" cy="744.0" r="5.0"/><circle cx="361.4" cy="746.3" r="5.0"/><circle cx="363.6" cy="747.6" r="5.0"/><circle cx="367.5" cy="750.8" r="5.0"/><circle cx="369.1" cy="753.5" r="5.0"/><circle cx="372.3" cy="755.7" r="5.0"/><circle cx="377.8" cy="758.0" r="5.0"/><circle cx="380.2" cy="759.5" r="5.0"/><circle cx="383.7" cy="763.3" r="5.0"/><circle cx="386.6" cy="764.7" r="5.0"/><circle cx="390.8" cy="768.0" r="5.0"/><circle cx="402.7" cy="775.7" r="5.0"/><circle cx="407.1" cy="777.9" r="5.0"/><circle cx="409.5" cy="778.2" r="5.0"/><circle cx="413.3" cy="781.7" r="5.0"/><circle cx="419.6" cy="783.7" r="5.0"/><circle cx="401.8" cy="774.7" r="5.0"/><circle cx="404.2" cy="776.1" r="5.0"/><circle cx="408.1" cy="777.6" r="5.0"/><circle cx="411.7" cy="780.0" r="5.0"/><circle cx="416.4" cy="783.7" r="5.0"/><circle cx="417.9" cy="784.5" r="5.0"/><circle cx="424.5" cy="786.8" r="5.0"/><circle cx="425.8" cy="787.1" r="5.0"/><circle cx="429.7" cy="788.9" r="5.0"/><circle cx="433.7" cy="791.2" r="5.0"/><circle cx="439.0" cy="793.6" r="5.0"/><circle cx="454.1" cy="801.5" r="5.0"/><circle cx="452.0" cy="800.0" r="5.0"/><circle cx="464.8" cy="806.0" r="5.0"/><circle cx="471.2" cy="809.0" r="5.0"/><circle cx="473.8" cy="808.5" r="5.0"/><circle cx="479.9" cy="811.5" r="5.0"/><circle cx="483.7" cy="812.5" r="5.0"/><circle cx="499.5" cy="817.3" r="5.0"/><circle cx="501.2" cy="817.0" r="5.0"/><circle cx="505.5" cy="818.8" r="5.0"/><circle cx="510.9" cy="819.9" r="5.0"/><circle cx="521.9" cy="822.7" r="5.0"/><circle cx="525.3" cy="823.5" r="5.0"/><circle cx="529.4" cy="824.4" r="5.0"/><circle cx="535.3" cy="826.2" r="5.0"/><circle cx="538.4" cy="826.6" r="5.0"/><circle cx="542.9" cy="828.4" r="5.0"/><circle cx="545.5" cy="827.6" r="5.0"/><circle cx="550.3" cy="829.6" r="5.0"/><circle cx="556.3" cy="829.5" r="5.0"/><circle cx="569.7" cy="831.2" r="5.0"/><circle cx="568.5" cy="830.6" r="5.0"/><circle cx="583.5" cy="832.8" r="5.0"/><circle cx="590.1" cy="833.2" r="5.0"/><circle cx="593.2" cy="833.9" r="5.0"/><circle cx="603.7" cy="833.4" r="5.0"/><circle cx="608.3" cy="834.9" r="5.0"/><circle cx="611.8" cy="834.2" r="5.0"/><circle cx="616.8" cy="833.6" r="5.0"/><circle cx="628.0" cy="833.5" r="5.0"/><circle cx="632.6" cy="833.9" r="5.0"/><circle cx="636.6" cy="833.2" r="5.0"/><circle cx="641.6" cy="833.0" r="5.0"/><circle cx="643.5" cy="832.9" r="5.0"/><circle cx="647.6" cy="833.1" r="5.0"/><circle cx="662.7" cy="830.8" r="5.0"/><circle cx="663.3" cy="831.6" r="5.0"/><circle cx="679.0" cy="829.7" r="5.0"/><circle cx="682.3" cy="828.5" r="5.0"/><circle cx="692.6" cy="826.6" r="5.0"/><circle cx="692.1" cy="826.5" r="5.0"/><circle cx="707.8" cy="824.1" r="5.0"/><circle cx="712.8" cy="823.7" r="5.0"/><circle cx="716.4" cy="822.2" r="5.0"/><circle cx="719.0" cy="821.6" r="5.0"/><circle cx="725.4" cy="820.1" r="5.0"/><circle cx="727.8" cy="818.6" r="5.0"/><circle cx="733.9" cy="818.2" r="5.0"/><circle cx="736.0" cy="816.9" r="5.0"/><circle cx="741.3" cy="815.7" r="5.0"/><circle cx="745.1" cy="814.4" r="5.0"/><circle cx="762.4" cy="808.6" r="5.0"/><circle cx="765.3" cy="807.6" r="5.0"/><circle cx="769.8" cy="804.7" r="5.0"/><circle cx="771.9" cy="803.6" r="5.0"/><circle cx="789.3" cy="797.0" r="5.0"/><circle cx="789.0" cy="796.4" r="5.0"/><circle cx="797.4" cy="792.2" r="5.0"/><circle cx="795.4" cy="793.4" r="5.0"/><circle cx="767.6" cy="805.0" r="5.0"/><circle cx="772.2" cy="803.9" r="5.0"/><circle cx="787.5" cy="797.1" r="5.0"/><circle cx="788.5" cy="797.2" r="5.0"/><circle cx="807.9" cy="787.6" r="5.0"/><circle cx="811.8" cy="786.3" r="5.0"/><circle cx="813.1" cy="784.5" r="5.0"/><circle cx="826.3" cy="776.5" r="5.0"/><circle cx="827.6" cy="777.0" r="5.0"/><circle cx="844.0" cy="766.3" r="5.0"/><circle cx="844.5" cy="767.0" r="5.0"/><circle cx="859.4" cy="756.4" r="5.0"/><circle cx="861.8" cy="753.8" r="5.0"/><circle cx="863.6" cy="753.8" r="5.0"/><circle cx="866.5" cy="749.8" r="5.0"/><circle cx="871.3" cy="747.1" r="5.0"/><circle cx="880.3" cy="739.5" r="5.0"/><circle cx="881.6" cy="739.0" r="5.0"/><circle cx="895.1" cy="727.7" r="5.0"/><circle cx="897.9" cy="724.5" r="5.0"/><circle cx="901.3" cy="722.4" r="5.0"/><circle cx="904.4" cy="719.1" r="5.0"/><circle cx="906.6" cy="715.9" r="5.0"/><circle cx="910.9" cy="712.5" r="5.0"/></g><g fill="#e64e18" fill-opacity="0.62" stroke="#e64e18" stroke-opacity="0.8" stroke-width="1"><circle cx="387.0" cy="107.0" r="5.0"/><circle cx="383.5" cy="108.8" r="5.0"/><circle cx="379.7" cy="110.4" r="5.0"/><circle cx="376.5" cy="113.8" r="5.0"/><circle cx="371.6" cy="117.4" r="5.0"/><circle cx="369.6" cy="118.5" r="5.0"/><circle cx="366.3" cy="121.3" r="5.0"/><circle cx="362.7" cy="125.6" r="5.0"/><circle cx="360.2" cy="128.4" r="5.0"/><circle cx="350.9" cy="137.0" r="5.0"/><circle cx="347.9" cy="139.4" r="5.0"/><circle cx="344.6" cy="142.4" r="5.0"/><circle cx="342.3" cy="145.5" r="5.0"/><circle cx="339.7" cy="147.9" r="5.0"/><circle cx="338.0" cy="149.8" r="5.0"/><circle cx="332.9" cy="153.7" r="5.0"/><circle cx="331.0" cy="156.7" r="5.0"/><circle cx="327.6" cy="160.1" r="5.0"/><circle cx="325.9" cy="160.7" r="5.0"/><circle cx="317.9" cy="171.1" r="5.0"/><circle cx="317.7" cy="172.4" r="5.0"/><circle cx="307.7" cy="184.3" r="5.0"/><circle cx="306.8" cy="184.0" r="5.0"/><circle cx="296.0" cy="201.6" r="5.0"/><circle cx="291.8" cy="206.2" r="5.0"/><circle cx="289.6" cy="209.7" r="5.0"/><circle cx="289.1" cy="210.4" r="5.0"/><circle cx="279.1" cy="225.8" r="5.0"/><circle cx="277.5" cy="230.9" r="5.0"/><circle cx="276.1" cy="233.7" r="5.0"/><circle cx="273.5" cy="237.2" r="5.0"/><circle cx="271.1" cy="242.7" r="5.0"/><circle cx="269.4" cy="244.1" r="5.0"/><circle cx="267.2" cy="248.4" r="5.0"/><circle cx="265.3" cy="252.5" r="5.0"/><circle cx="264.1" cy="257.5" r="5.0"/><circle cx="261.6" cy="262.7" r="5.0"/><circle cx="260.7" cy="266.2" r="5.0"/><circle cx="259.1" cy="268.8" r="5.0"/><circle cx="390.3" cy="104.4" r="5.0"/><circle cx="394.4" cy="100.0" r="5.0"/><circle cx="401.2" cy="96.8" r="5.0"/><circle cx="402.5" cy="96.1" r="5.0"/><circle cx="824.2" cy="90.4" r="5.0"/><circle cx="826.0" cy="93.1" r="5.0"/><circle cx="831.0" cy="95.7" r="5.0"/><circle cx="833.7" cy="96.9" r="5.0"/><circle cx="838.2" cy="101.1" r="5.0"/><circle cx="840.9" cy="102.5" r="5.0"/><circle cx="845.9" cy="106.3" r="5.0"/><circle cx="848.5" cy="108.1" r="5.0"/><circle cx="851.6" cy="110.4" r="5.0"/><circle cx="859.7" cy="115.6" r="5.0"/><circle cx="857.2" cy="114.8" r="5.0"/><circle cx="866.6" cy="121.6" r="5.0"/><circle cx="870.7" cy="126.8" r="5.0"/><circle cx="874.2" cy="128.9" r="5.0"/><circle cx="877.6" cy="132.0" r="5.0"/><circle cx="879.2" cy="133.3" r="5.0"/><circle cx="882.7" cy="137.7" r="5.0"/><circle cx="900.6" cy="154.1" r="5.0"/><circle cx="902.2" cy="157.3" r="5.0"/><circle cx="905.2" cy="159.9" r="5.0"/><circle cx="907.3" cy="162.9" r="5.0"/><circle cx="911.9" cy="167.1" r="5.0"/><circle cx="913.2" cy="169.9" r="5.0"/><circle cx="917.9" cy="173.5" r="5.0"/><circle cx="918.1" cy="175.5" r="5.0"/><circle cx="923.4" cy="180.1" r="5.0"/><circle cx="928.0" cy="187.5" r="5.0"/><circle cx="931.8" cy="191.3" r="5.0"/><circle cx="934.6" cy="195.4" r="5.0"/><circle cx="936.2" cy="197.8" r="5.0"/><circle cx="938.6" cy="201.6" r="5.0"/><circle cx="941.5" cy="207.1" r="5.0"/><circle cx="943.4" cy="208.6" r="5.0"/><circle cx="945.1" cy="213.4" r="5.0"/><circle cx="947.8" cy="216.7" r="5.0"/><circle cx="949.2" cy="220.4" r="5.0"/><circle cx="953.2" cy="225.2" r="5.0"/><circle cx="953.8" cy="228.7" r="5.0"/><circle cx="956.3" cy="230.4" r="5.0"/><circle cx="958.6" cy="234.3" r="5.0"/><circle cx="960.8" cy="239.5" r="5.0"/><circle cx="962.5" cy="242.6" r="5.0"/><circle cx="247.4" cy="301.1" r="5.0"/><circle cx="245.4" cy="307.2" r="5.0"/><circle cx="244.9" cy="309.8" r="5.0"/><circle cx="242.5" cy="312.9" r="5.0"/><circle cx="241.9" cy="318.5" r="5.0"/><circle cx="241.8" cy="321.5" r="5.0"/><circle cx="234.8" cy="348.4" r="5.0"/><circle cx="233.9" cy="352.8" r="5.0"/><circle cx="232.7" cy="356.6" r="5.0"/><circle cx="233.3" cy="361.0" r="5.0"/><circle cx="232.0" cy="373.6" r="5.0"/><circle cx="230.8" cy="378.6" r="5.0"/><circle cx="231.1" cy="381.1" r="5.0"/><circle cx="230.8" cy="386.0" r="5.0"/><circle cx="228.7" cy="391.2" r="5.0"/><circle cx="229.8" cy="394.1" r="5.0"/><circle cx="229.0" cy="398.1" r="5.0"/><circle cx="228.2" cy="403.6" r="5.0"/><circle cx="229.0" cy="407.4" r="5.0"/><circle cx="229.4" cy="409.8" r="5.0"/><circle cx="228.0" cy="414.5" r="5.0"/><circle cx="229.4" cy="418.3" r="5.0"/><circle cx="228.1" cy="423.6" r="5.0"/><circle cx="228.2" cy="427.8" r="5.0"/><circle cx="229.3" cy="433.0" r="5.0"/><circle cx="229.4" cy="437.3" r="5.0"/><circle cx="229.3" cy="439.4" r="5.0"/><circle cx="228.9" cy="443.3" r="5.0"/><circle cx="229.3" cy="449.2" r="5.0"/><circle cx="229.9" cy="452.8" r="5.0"/><circle cx="229.8" cy="456.7" r="5.0"/><circle cx="231.2" cy="460.4" r="5.0"/><circle cx="230.5" cy="466.0" r="5.0"/><circle cx="231.3" cy="470.7" r="5.0"/><circle cx="232.9" cy="474.0" r="5.0"/><circle cx="232.3" cy="476.2" r="5.0"/><circle cx="233.3" cy="482.1" r="5.0"/><circle cx="239.3" cy="509.2" r="5.0"/><circle cx="239.8" cy="512.7" r="5.0"/><circle cx="241.7" cy="516.8" r="5.0"/><circle cx="242.5" cy="518.5" r="5.0"/><circle cx="243.0" cy="521.4" r="5.0"/><circle cx="244.2" cy="525.4" r="5.0"/><circle cx="250.5" cy="545.5" r="5.0"/><circle cx="250.7" cy="549.2" r="5.0"/><circle cx="252.2" cy="553.4" r="5.0"/><circle cx="254.2" cy="555.4" r="5.0"/><circle cx="254.5" cy="559.6" r="5.0"/><circle cx="257.0" cy="565.7" r="5.0"/><circle cx="258.1" cy="567.9" r="5.0"/><circle cx="259.7" cy="571.1" r="5.0"/><circle cx="261.7" cy="574.8" r="5.0"/><circle cx="263.9" cy="581.7" r="5.0"/><circle cx="266.1" cy="583.3" r="5.0"/><circle cx="267.4" cy="589.3" r="5.0"/><circle cx="269.2" cy="591.0" r="5.0"/><circle cx="282.7" cy="615.4" r="5.0"/><circle cx="283.4" cy="617.7" r="5.0"/><circle cx="292.3" cy="631.4" r="5.0"/><circle cx="294.7" cy="635.3" r="5.0"/><circle cx="297.7" cy="638.7" r="5.0"/><circle cx="300.4" cy="643.3" r="5.0"/><circle cx="313.8" cy="661.8" r="5.0"/><circle cx="316.0" cy="663.8" r="5.0"/><circle cx="317.8" cy="667.6" r="5.0"/><circle cx="321.9" cy="671.4" r="5.0"/><circle cx="323.9" cy="672.4" r="5.0"/><circle cx="326.0" cy="676.5" r="5.0"/><circle cx="329.7" cy="679.6" r="5.0"/><circle cx="331.1" cy="682.9" r="5.0"/><circle cx="335.5" cy="686.5" r="5.0"/><circle cx="337.3" cy="688.0" r="5.0"/><circle cx="963.2" cy="593.6" r="5.0"/><circle cx="962.4" cy="594.4" r="5.0"/><circle cx="948.9" cy="618.0" r="5.0"/><circle cx="948.8" cy="619.1" r="5.0"/><circle cx="940.2" cy="632.9" r="5.0"/><circle cx="937.8" cy="635.1" r="5.0"/><circle cx="936.6" cy="638.8" r="5.0"/><circle cx="933.3" cy="641.5" r="5.0"/><circle cx="930.5" cy="646.7" r="5.0"/><circle cx="928.4" cy="649.9" r="5.0"/><circle cx="919.9" cy="659.3" r="5.0"/><circle cx="920.4" cy="660.8" r="5.0"/><circle cx="901.7" cy="682.4" r="5.0"/><circle cx="898.2" cy="684.7" r="5.0"/><circle cx="893.8" cy="689.1" r="5.0"/><circle cx="361.5" cy="710.4" r="5.0"/><circle cx="364.0" cy="712.9" r="5.0"/><circle cx="367.6" cy="715.3" r="5.0"/><circle cx="370.3" cy="719.0" r="5.0"/><circle cx="372.3" cy="721.1" r="5.0"/><circle cx="395.4" cy="738.1" r="5.0"/><circle cx="398.2" cy="739.4" r="5.0"/><circle cx="403.6" cy="742.8" r="5.0"/><circle cx="404.8" cy="744.6" r="5.0"/><circle cx="410.9" cy="747.3" r="5.0"/><circle cx="412.6" cy="749.6" r="5.0"/><circle cx="418.0" cy="751.2" r="5.0"/><circle cx="402.5" cy="742.5" r="5.0"/><circle cx="406.7" cy="745.4" r="5.0"/><circle cx="410.2" cy="747.9" r="5.0"/><circle cx="412.4" cy="749.2" r="5.0"/><circle cx="417.0" cy="752.1" r="5.0"/><circle cx="418.8" cy="753.1" r="5.0"/><circle cx="424.4" cy="755.7" r="5.0"/><circle cx="426.1" cy="756.9" r="5.0"/><circle cx="432.5" cy="759.6" r="5.0"/><circle cx="434.0" cy="761.1" r="5.0"/><circle cx="438.2" cy="763.9" r="5.0"/><circle cx="442.0" cy="766.3" r="5.0"/><circle cx="446.2" cy="767.9" r="5.0"/><circle cx="450.3" cy="768.4" r="5.0"/><circle cx="453.0" cy="769.7" r="5.0"/><circle cx="466.8" cy="776.8" r="5.0"/><circle cx="469.6" cy="778.7" r="5.0"/><circle cx="474.3" cy="779.1" r="5.0"/><circle cx="475.5" cy="780.7" r="5.0"/><circle cx="482.1" cy="782.1" r="5.0"/><circle cx="484.8" cy="784.2" r="5.0"/><circle cx="487.6" cy="785.6" r="5.0"/><circle cx="492.0" cy="786.5" r="5.0"/><circle cx="504.1" cy="790.7" r="5.0"/><circle cx="507.2" cy="790.7" r="5.0"/><circle cx="512.0" cy="791.7" r="5.0"/><circle cx="516.5" cy="792.8" r="5.0"/><circle cx="519.9" cy="794.4" r="5.0"/><circle cx="525.2" cy="795.0" r="5.0"/><circle cx="528.2" cy="796.4" r="5.0"/><circle cx="538.1" cy="799.6" r="5.0"/><circle cx="543.6" cy="799.3" r="5.0"/><circle cx="547.3" cy="800.1" r="5.0"/><circle cx="552.2" cy="800.9" r="5.0"/><circle cx="554.9" cy="802.3" r="5.0"/><circle cx="558.2" cy="802.0" r="5.0"/><circle cx="563.7" cy="802.6" r="5.0"/><circle cx="567.1" cy="803.0" r="5.0"/><circle cx="573.0" cy="805.0" r="5.0"/><circle cx="580.5" cy="805.5" r="5.0"/><circle cx="586.1" cy="805.2" r="5.0"/><circle cx="588.4" cy="805.7" r="5.0"/><circle cx="593.1" cy="805.4" r="5.0"/><circle cx="603.0" cy="806.7" r="5.0"/><circle cx="607.5" cy="806.8" r="5.0"/><circle cx="611.0" cy="807.5" r="5.0"/><circle cx="615.6" cy="807.4" r="5.0"/><circle cx="617.1" cy="807.3" r="5.0"/><circle cx="624.0" cy="806.5" r="5.0"/><circle cx="626.2" cy="806.4" r="5.0"/><circle cx="630.5" cy="806.0" r="5.0"/><circle cx="634.8" cy="805.6" r="5.0"/><circle cx="639.0" cy="806.5" r="5.0"/><circle cx="644.0" cy="806.1" r="5.0"/><circle cx="648.0" cy="806.1" r="5.0"/><circle cx="649.4" cy="806.1" r="5.0"/><circle cx="666.8" cy="804.3" r="5.0"/><circle cx="671.1" cy="802.5" r="5.0"/><circle cx="674.6" cy="802.8" r="5.0"/><circle cx="687.5" cy="801.0" r="5.0"/><circle cx="689.1" cy="799.9" r="5.0"/><circle cx="694.1" cy="799.1" r="5.0"/><circle cx="699.2" cy="797.1" r="5.0"/><circle cx="701.1" cy="797.0" r="5.0"/><circle cx="707.3" cy="796.6" r="5.0"/><circle cx="711.9" cy="795.6" r="5.0"/><circle cx="713.1" cy="794.7" r="5.0"/><circle cx="717.0" cy="793.2" r="5.0"/><circle cx="723.7" cy="791.9" r="5.0"/><circle cx="726.4" cy="790.6" r="5.0"/><circle cx="729.5" cy="789.5" r="5.0"/><circle cx="740.5" cy="785.8" r="5.0"/><circle cx="746.2" cy="784.0" r="5.0"/><circle cx="749.9" cy="783.2" r="5.0"/><circle cx="751.5" cy="782.6" r="5.0"/><circle cx="756.0" cy="781.0" r="5.0"/><circle cx="765.0" cy="776.3" r="5.0"/><circle cx="768.0" cy="775.2" r="5.0"/><circle cx="771.5" cy="773.7" r="5.0"/><circle cx="775.6" cy="772.4" r="5.0"/><circle cx="790.4" cy="765.9" r="5.0"/><circle cx="791.2" cy="764.6" r="5.0"/><circle cx="794.8" cy="763.0" r="5.0"/><circle cx="799.4" cy="761.7" r="5.0"/><circle cx="765.1" cy="776.9" r="5.0"/><circle cx="770.9" cy="775.0" r="5.0"/><circle cx="774.6" cy="772.3" r="5.0"/><circle cx="778.6" cy="771.7" r="5.0"/><circle cx="787.3" cy="767.5" r="5.0"/><circle cx="791.1" cy="764.5" r="5.0"/><circle cx="794.5" cy="762.6" r="5.0"/><circle cx="799.9" cy="760.0" r="5.0"/><circle cx="804.2" cy="759.3" r="5.0"/><circle cx="812.5" cy="753.0" r="5.0"/><circle cx="816.4" cy="751.5" r="5.0"/><circle cx="820.7" cy="748.4" r="5.0"/><circle cx="824.7" cy="747.1" r="5.0"/><circle cx="834.2" cy="741.0" r="5.0"/><circle cx="837.5" cy="738.4" r="5.0"/><circle cx="840.9" cy="735.3" r="5.0"/><circle cx="841.6" cy="734.1" r="5.0"/><circle cx="845.5" cy="731.9" r="5.0"/><circle cx="854.3" cy="724.8" r="5.0"/><circle cx="857.4" cy="722.0" r="5.0"/><circle cx="862.0" cy="720.1" r="5.0"/><circle cx="864.1" cy="717.2" r="5.0"/><circle cx="868.9" cy="714.4" r="5.0"/></g><g fill="#19a3e6" fill-opacity="0.62" stroke="#19a3e6" stroke-opacity="0.8" stroke-width="1"><circle cx="388.3" cy="126.4" r="5.0"/><circle cx="386.7" cy="127.8" r="5.0"/><circle cx="382.2" cy="131.3" r="5.0"/><circle cx="379.9" cy="135.0" r="5.0"/><circle cx="377.0" cy="137.5" r="5.0"/><circle cx="369.8" cy="142.7" r="5.0"/><circle cx="366.0" cy="145.7" r="5.0"/><circle cx="364.3" cy="147.6" r="5.0"/><circle cx="355.9" cy="157.2" r="5.0"/><circle cx="355.1" cy="155.9" r="5.0"/><circle cx="346.8" cy="164.8" r="5.0"/><circle cx="348.2" cy="164.9" r="5.0"/><circle cx="338.2" cy="175.4" r="5.0"/><circle cx="333.7" cy="178.8" r="5.0"/><circle cx="332.8" cy="181.5" r="5.0"/><circle cx="328.2" cy="186.2" r="5.0"/><circle cx="326.3" cy="190.3" r="5.0"/><circle cx="323.8" cy="191.2" r="5.0"/><circle cx="310.7" cy="211.5" r="5.0"/><circle cx="306.8" cy="214.7" r="5.0"/><circle cx="305.3" cy="219.1" r="5.0"/><circle cx="302.5" cy="224.3" r="5.0"/><circle cx="300.0" cy="225.5" r="5.0"/><circle cx="291.9" cy="241.1" r="5.0"/><circle cx="290.0" cy="245.0" r="5.0"/><circle cx="286.5" cy="250.1" r="5.0"/><circle cx="285.6" cy="254.1" r="5.0"/><circle cx="284.2" cy="257.1" r="5.0"/><circle cx="282.1" cy="261.3" r="5.0"/><circle cx="281.2" cy="263.9" r="5.0"/><circle cx="278.5" cy="268.8" r="5.0"/><circle cx="277.0" cy="271.2" r="5.0"/><circle cx="275.7" cy="275.1" r="5.0"/><circle cx="393.0" cy="124.4" r="5.0"/><circle cx="397.3" cy="120.8" r="5.0"/><circle cx="407.6" cy="112.7" r="5.0"/><circle cx="413.3" cy="110.3" r="5.0"/><circle cx="415.7" cy="107.8" r="5.0"/><circle cx="418.0" cy="107.4" r="5.0"/><circle cx="421.8" cy="103.7" r="5.0"/><circle cx="427.1" cy="101.8" r="5.0"/><circle cx="429.7" cy="99.1" r="5.0"/><circle cx="433.9" cy="97.8" r="5.0"/><circle cx="437.5" cy="95.8" r="5.0"/><circle cx="439.3" cy="94.0" r="5.0"/><circle cx="796.7" cy="95.0" r="5.0"/><circle cx="801.7" cy="99.0" r="5.0"/><circle cx="803.7" cy="100.1" r="5.0"/><circle cx="808.4" cy="103.4" r="5.0"/><circle cx="813.5" cy="105.9" r="5.0"/><circle cx="817.7" cy="107.4" r="5.0"/><circle cx="818.5" cy="109.2" r="5.0"/><circle cx="822.9" cy="112.6" r="5.0"/><circle cx="827.0" cy="114.0" r="5.0"/><circle cx="830.0" cy="117.1" r="5.0"/><circle cx="834.5" cy="119.6" r="5.0"/><circle cx="838.6" cy="122.3" r="5.0"/><circle cx="840.2" cy="123.7" r="5.0"/><circle cx="844.3" cy="126.4" r="5.0"/><circle cx="847.6" cy="129.6" r="5.0"/><circle cx="853.7" cy="134.2" r="5.0"/><circle cx="853.3" cy="135.0" r="5.0"/><circle cx="867.9" cy="148.2" r="5.0"/><circle cx="870.4" cy="149.4" r="5.0"/><circle cx="874.7" cy="154.0" r="5.0"/><circle cx="884.2" cy="163.3" r="5.0"/><circle cx="888.3" cy="166.9" r="5.0"/><circle cx="890.3" cy="168.6" r="5.0"/><circle cx="898.5" cy="179.3" r="5.0"/><circle cx="902.4" cy="182.9" r="5.0"/><circle cx="903.3" cy="186.3" r="5.0"/><circle cx="911.0" cy="195.9" r="5.0"/><circle cx="915.6" cy="199.5" r="5.0"/><circle cx="917.8" cy="202.7" r="5.0"/><circle cx="920.4" cy="206.6" r="5.0"/><circle cx="929.7" cy="222.5" r="5.0"/><circle cx="932.1" cy="224.0" r="5.0"/><circle cx="934.7" cy="229.5" r="5.0"/><circle cx="936.0" cy="233.1" r="5.0"/><circle cx="937.9" cy="236.7" r="5.0"/><circle cx="946.4" cy="252.1" r="5.0"/><circle cx="948.5" cy="254.9" r="5.0"/><circle cx="949.7" cy="259.9" r="5.0"/><circle cx="957.4" cy="274.1" r="5.0"/><circle cx="958.4" cy="278.1" r="5.0"/><circle cx="262.7" cy="308.1" r="5.0"/><circle cx="263.0" cy="311.1" r="5.0"/><circle cx="260.9" cy="315.8" r="5.0"/><circle cx="259.8" cy="319.3" r="5.0"/><circle cx="258.9" cy="324.1" r="5.0"/><circle cx="255.4" cy="336.3" r="5.0"/><circle cx="255.0" cy="340.7" r="5.0"/><circle cx="253.7" cy="345.7" r="5.0"/><circle cx="253.7" cy="348.7" r="5.0"/><circle cx="253.4" cy="351.8" r="5.0"/><circle cx="252.1" cy="358.2" r="5.0"/><circle cx="252.0" cy="359.4" r="5.0"/><circle cx="250.6" cy="365.6" r="5.0"/><circle cx="249.1" cy="382.7" r="5.0"/><circle cx="247.7" cy="384.6" r="5.0"/><circle cx="247.4" cy="388.0" r="5.0"/><circle cx="248.2" cy="392.4" r="5.0"/><circle cx="247.5" cy="395.5" r="5.0"/><circle cx="246.1" cy="406.5" r="5.0"/><circle cx="247.4" cy="411.1" r="5.0"/><circle cx="245.8" cy="415.3" r="5.0"/><circle cx="247.2" cy="422.0" r="5.0"/><circle cx="247.3" cy="427.0" r="5.0"/><circle cx="246.0" cy="429.2" r="5.0"/><circle cx="246.6" cy="433.6" r="5.0"/><circle cx="247.4" cy="448.4" r="5.0"/><circle cx="248.4" cy="448.8" r="5.0"/><circle cx="248.5" cy="461.8" r="5.0"/><circle cx="249.7" cy="465.1" r="5.0"/><circle cx="250.9" cy="469.6" r="5.0"/><circle cx="250.8" cy="472.3" r="5.0"/><circle cx="251.4" cy="477.6" r="5.0"/><circle cx="251.0" cy="481.3" r="5.0"/><circle cx="256.9" cy="504.9" r="5.0"/><circle cx="257.3" cy="508.1" r="5.0"/><circle cx="258.3" cy="513.7" r="5.0"/><circle cx="260.7" cy="517.1" r="5.0"/><circle cx="260.8" cy="520.1" r="5.0"/><circle cx="270.8" cy="552.2" r="5.0"/><circle cx="273.9" cy="556.2" r="5.0"/><circle cx="274.3" cy="561.0" r="5.0"/><circle cx="277.3" cy="566.8" r="5.0"/><circle cx="278.0" cy="569.8" r="5.0"/><circle cx="283.5" cy="580.7" r="5.0"/><circle cx="285.1" cy="582.7" r="5.0"/><circle cx="289.2" cy="591.5" r="5.0"/><circle cx="289.8" cy="591.3" r="5.0"/><circle cx="297.8" cy="608.3" r="5.0"/><circle cx="297.6" cy="606.8" r="5.0"/><circle cx="308.0" cy="623.0" r="5.0"/><circle cx="309.7" cy="624.8" r="5.0"/><circle cx="311.7" cy="629.5" r="5.0"/><circle cx="314.5" cy="631.3" r="5.0"/><circle cx="316.9" cy="636.7" r="5.0"/><circle cx="318.4" cy="638.2" r="5.0"/><circle cx="321.1" cy="642.7" r="5.0"/><circle cx="324.1" cy="645.4" r="5.0"/><circle cx="327.8" cy="649.2" r="5.0"/><circle cx="329.4" cy="651.2" r="5.0"/><circle cx="332.0" cy="654.9" r="5.0"/><circle cx="334.7" cy="658.2" r="5.0"/><circle cx="338.6" cy="662.1" r="5.0"/><circle cx="339.5" cy="665.4" r="5.0"/><circle cx="352.2" cy="676.7" r="5.0"/><circle cx="352.3" cy="678.6" r="5.0"/><circle cx="362.0" cy="687.6" r="5.0"/><circle cx="365.2" cy="690.4" r="5.0"/><circle cx="962.3" cy="551.3" r="5.0"/><circle cx="961.5" cy="550.5" r="5.0"/><circle cx="956.5" cy="564.3" r="5.0"/><circle cx="955.1" cy="568.3" r="5.0"/><circle cx="954.9" cy="570.4" r="5.0"/><circle cx="945.5" cy="587.9" r="5.0"/><circle cx="944.8" cy="591.3" r="5.0"/><circle cx="941.4" cy="595.8" r="5.0"/><circle cx="939.6" cy="597.8" r="5.0"/><circle cx="938.1" cy="603.5" r="5.0"/><circle cx="936.3" cy="604.8" r="5.0"/><circle cx="926.2" cy="622.5" r="5.0"/><circle cx="923.3" cy="626.7" r="5.0"/><circle cx="921.9" cy="628.8" r="5.0"/><circle cx="918.7" cy="631.2" r="5.0"/><circle cx="916.4" cy="635.5" r="5.0"/><circle cx="914.0" cy="637.8" r="5.0"/><circle cx="899.0" cy="658.1" r="5.0"/><circle cx="897.9" cy="658.6" r="5.0"/><circle cx="888.1" cy="670.4" r="5.0"/><circle cx="886.3" cy="671.7" r="5.0"/><circle cx="874.0" cy="684.0" r="5.0"/><circle cx="870.8" cy="686.3" r="5.0"/><circle cx="867.5" cy="691.5" r="5.0"/><circle cx="397.9" cy="717.8" r="5.0"/><circle cx="397.2" cy="717.2" r="5.0"/><circle cx="406.8" cy="724.2" r="5.0"/><circle cx="412.7" cy="727.1" r="5.0"/><circle cx="414.8" cy="729.9" r="5.0"/><circle cx="417.8" cy="731.8" r="5.0"/><circle cx="400.6" cy="720.1" r="5.0"/><circle cx="406.0" cy="722.1" r="5.0"/><circle cx="407.1" cy="724.0" r="5.0"/><circle cx="411.5" cy="726.4" r="5.0"/><circle cx="414.8" cy="728.8" r="5.0"/><circle cx="419.8" cy="731.2" r="5.0"/><circle cx="423.3" cy="735.1" r="5.0"/><circle cx="428.3" cy="736.8" r="5.0"/><circle cx="431.5" cy="738.5" r="5.0"/><circle cx="434.9" cy="741.6" r="5.0"/><circle cx="454.9" cy="751.4" r="5.0"/><circle cx="456.8" cy="752.7" r="5.0"/><circle cx="462.4" cy="755.4" r="5.0"/><circle cx="464.1" cy="756.4" r="5.0"/><circle cx="470.6" cy="758.9" r="5.0"/><circle cx="472.1" cy="760.0" r="5.0"/><circle cx="478.5" cy="761.7" r="5.0"/><circle cx="481.4" cy="762.6" r="5.0"/><circle cx="484.6" cy="765.2" r="5.0"/><circle cx="496.9" cy="769.7" r="5.0"/><circle cx="499.8" cy="769.5" r="5.0"/><circle cx="504.7" cy="771.7" r="5.0"/><circle cx="509.0" cy="773.1" r="5.0"/><circle cx="513.2" cy="773.2" r="5.0"/><circle cx="526.1" cy="776.7" r="5.0"/><circle cx="530.5" cy="778.3" r="5.0"/><circle cx="535.2" cy="779.9" r="5.0"/><circle cx="540.1" cy="780.7" r="5.0"/><circle cx="542.4" cy="782.0" r="5.0"/><circle cx="548.0" cy="783.3" r="5.0"/><circle cx="563.5" cy="785.1" r="5.0"/><circle cx="565.5" cy="784.9" r="5.0"/><circle cx="584.9" cy="786.8" r="5.0"/><circle cx="589.5" cy="788.2" r="5.0"/><circle cx="593.1" cy="788.6" r="5.0"/><circle cx="597.3" cy="788.3" r="5.0"/><circle cx="601.1" cy="787.5" r="5.0"/><circle cx="607.4" cy="788.2" r="5.0"/><circle cx="611.6" cy="788.4" r="5.0"/><circle cx="614.9" cy="789.4" r="5.0"/><circle cx="619.5" cy="788.8" r="5.0"/><circle cx="624.1" cy="787.9" r="5.0"/><circle cx="626.8" cy="789.3" r="5.0"/><circle cx="632.6" cy="789.0" r="5.0"/><circle cx="637.4" cy="787.6" r="5.0"/><circle cx="640.7" cy="788.0" r="5.0"/><circle cx="644.5" cy="787.6" r="5.0"/><circle cx="649.1" cy="787.5" r="5.0"/><circle cx="661.0" cy="786.6" r="5.0"/><circle cx="664.3" cy="786.4" r="5.0"/><circle cx="669.0" cy="784.2" r="5.0"/><circle cx="673.1" cy="784.5" r="5.0"/><circle cx="677.6" cy="783.8" r="5.0"/><circle cx="680.4" cy="782.8" r="5.0"/><circle cx="684.9" cy="782.0" r="5.0"/><circle cx="689.6" cy="782.0" r="5.0"/><circle cx="692.7" cy="780.7" r="5.0"/><circle cx="697.1" cy="779.8" r="5.0"/><circle cx="702.4" cy="777.8" r="5.0"/><circle cx="708.0" cy="777.5" r="5.0"/><circle cx="712.2" cy="776.8" r="5.0"/><circle cx="715.9" cy="775.3" r="5.0"/><circle cx="732.5" cy="770.9" r="5.0"/><circle cx="735.7" cy="769.6" r="5.0"/><circle cx="738.1" cy="768.5" r="5.0"/><circle cx="748.2" cy="764.1" r="5.0"/><circle cx="752.9" cy="763.3" r="5.0"/><circle cx="757.0" cy="761.9" r="5.0"/><circle cx="760.8" cy="758.7" r="5.0"/><circle cx="763.1" cy="759.0" r="5.0"/><circle cx="767.7" cy="756.3" r="5.0"/><circle cx="782.6" cy="748.9" r="5.0"/><circle cx="788.6" cy="746.6" r="5.0"/><circle cx="790.4" cy="744.5" r="5.0"/><circle cx="793.6" cy="742.7" r="5.0"/><circle cx="799.1" cy="740.1" r="5.0"/><circle cx="766.3" cy="756.6" r="5.0"/><circle cx="770.1" cy="755.3" r="5.0"/><circle cx="783.5" cy="748.9" r="5.0"/><circle cx="787.9" cy="747.0" r="5.0"/><circle cx="791.1" cy="744.7" r="5.0"/><circle cx="795.4" cy="743.3" r="5.0"/><circle cx="798.7" cy="741.7" r="5.0"/><circle cx="803.8" cy="737.7" r="5.0"/><circle cx="811.3" cy="733.6" r="5.0"/><circle cx="815.0" cy="730.7" r="5.0"/><circle cx="818.3" cy="729.6" r="5.0"/><circle cx="821.5" cy="725.7" r="5.0"/><circle cx="825.7" cy="722.9" r="5.0"/><circle cx="838.5" cy="715.4" r="5.0"/><circle cx="841.1" cy="713.0" r="5.0"/><circle cx="844.3" cy="709.9" r="5.0"/></g><g fill="#fb3c0c" fill-opacity="0.62" stroke="#fb3c0c" stroke-opacity="0.8" stroke-width="1"><circle cx="383.2" cy="181.1" r="5.0"/><circle cx="379.0" cy="185.3" r="5.0"/><circle cx="376.5" cy="188.1" r="5.0"/><circle cx="375.3" cy="190.5" r="5.0"/><circle cx="371.5" cy="194.1" r="5.0"/><circle cx="368.0" cy="196.5" r="5.0"/><circle cx="365.6" cy="200.3" r="5.0"/><circle cx="363.0" cy="202.7" r="5.0"/><circle cx="360.4" cy="207.1" r="5.0"/><circle cx="356.9" cy="210.9" r="5.0"/><circle cx="353.9" cy="213.2" r="5.0"/><circle cx="352.0" cy="216.3" r="5.0"/><circle cx="343.4" cy="226.9" r="5.0"/><circle cx="341.6" cy="230.4" r="5.0"/><circle cx="339.8" cy="233.5" r="5.0"/><circle cx="337.4" cy="237.3" r="5.0"/><circle cx="335.8" cy="239.7" r="5.0"/><circle cx="333.1" cy="243.2" r="5.0"/><circle cx="329.7" cy="248.1" r="5.0"/><circle cx="329.2" cy="250.2" r="5.0"/><circle cx="325.5" cy="255.6" r="5.0"/><circle cx="325.1" cy="259.0" r="5.0"/><circle cx="317.4" cy="274.2" r="5.0"/><circle cx="316.2" cy="276.5" r="5.0"/><circle cx="313.7" cy="278.9" r="5.0"/><circle cx="397.9" cy="167.5" r="5.0"/><circle cx="396.4" cy="169.4" r="5.0"/><circle cx="405.1" cy="161.4" r="5.0"/><circle cx="408.9" cy="159.3" r="5.0"/><circle cx="412.6" cy="156.5" r="5.0"/><circle cx="416.2" cy="153.2" r="5.0"/><circle cx="419.3" cy="149.9" r="5.0"/><circle cx="439.6" cy="136.6" r="5.0"/><circle cx="442.6" cy="135.1" r="5.0"/><circle cx="446.0" cy="133.2" r="5.0"/><circle cx="450.3" cy="129.7" r="5.0"/><circle cx="476.6" cy="117.2" r="5.0"/><circle cx="479.2" cy="114.5" r="5.0"/><circle cx="484.3" cy="112.5" r="5.0"/><circle cx="489.8" cy="110.8" r="5.0"/><circle cx="493.1" cy="109.7" r="5.0"/><circle cx="507.5" cy="103.7" r="5.0"/><circle cx="511.2" cy="103.1" r="5.0"/><circle cx="523.9" cy="98.5" r="5.0"/><circle cx="527.3" cy="98.1" r="5.0"/><circle cx="530.9" cy="97.8" r="5.0"/><circle cx="536.8" cy="96.2" r="5.0"/><circle cx="539.1" cy="95.3" r="5.0"/><circle cx="554.6" cy="92.3" r="5.0"/><circle cx="557.7" cy="90.3" r="5.0"/><circle cx="560.5" cy="90.9" r="5.0"/><circle cx="665.2" cy="89.1" r="5.0"/><circle cx="669.8" cy="90.7" r="5.0"/><circle cx="674.3" cy="90.4" r="5.0"/><circle cx="677.5" cy="91.3" r="5.0"/><circle cx="682.3" cy="93.1" r="5.0"/><circle cx="687.9" cy="93.2" r="5.0"/><circle cx="690.9" cy="93.8" r="5.0"/><circle cx="695.4" cy="95.2" r="5.0"/><circle cx="698.5" cy="96.1" r="5.0"/><circle cx="703.0" cy="96.5" r="5.0"/><circle cx="709.3" cy="98.1" r="5.0"/><circle cx="711.5" cy="100.5" r="5.0"/><circle cx="717.5" cy="100.8" r="5.0"/><circle cx="719.3" cy="102.1" r="5.0"/><circle cx="725.1" cy="104.5" r="5.0"/><circle cx="728.1" cy="105.6" r="5.0"/><circle cx="731.9" cy="107.1" r="5.0"/><circle cx="741.9" cy="109.4" r="5.0"/><circle cx="746.7" cy="111.6" r="5.0"/><circle cx="751.2" cy="113.4" r="5.0"/><circle cx="755.1" cy="116.5" r="5.0"/><circle cx="756.7" cy="116.7" r="5.0"/><circle cx="761.4" cy="119.9" r="5.0"/><circle cx="765.0" cy="120.8" r="5.0"/><circle cx="768.7" cy="123.3" r="5.0"/><circle cx="773.8" cy="125.6" r="5.0"/><circle cx="777.0" cy="128.0" r="5.0"/><circle cx="779.8" cy="127.8" r="5.0"/><circle cx="785.1" cy="130.7" r="5.0"/><circle cx="787.6" cy="132.2" r="5.0"/><circle cx="765.2" cy="119.9" r="5.0"/><circle cx="770.1" cy="123.9" r="5.0"/><circle cx="771.9" cy="123.7" r="5.0"/><circle cx="776.5" cy="126.4" r="5.0"/><circle cx="779.9" cy="128.8" r="5.0"/><circle cx="782.6" cy="130.8" r="5.0"/><circle cx="787.2" cy="133.3" r="5.0"/><circle cx="790.9" cy="134.1" r="5.0"/><circle cx="794.8" cy="136.5" r="5.0"/><circle cx="811.7" cy="149.3" r="5.0"/><circle cx="814.7" cy="150.4" r="5.0"/><circle cx="817.3" cy="154.1" r="5.0"/><circle cx="822.1" cy="157.1" r="5.0"/><circle cx="831.4" cy="165.1" r="5.0"/><circle cx="831.4" cy="163.4" r="5.0"/><circle cx="843.0" cy="174.8" r="5.0"/><circle cx="845.0" cy="175.8" r="5.0"/><circle cx="847.3" cy="179.9" r="5.0"/><circle cx="852.0" cy="182.2" r="5.0"/><circle cx="856.2" cy="187.0" r="5.0"/><circle cx="863.0" cy="195.3" r="5.0"/><circle cx="867.2" cy="198.3" r="5.0"/><circle cx="869.1" cy="202.4" r="5.0"/><circle cx="870.9" cy="204.4" r="5.0"/><circle cx="874.0" cy="209.0" r="5.0"/><circle cx="882.0" cy="216.6" r="5.0"/><circle cx="883.5" cy="218.4" r="5.0"/><circle cx="885.7" cy="223.5" r="5.0"/><circle cx="890.0" cy="227.3" r="5.0"/><circle cx="890.3" cy="229.5" r="5.0"/><circle cx="893.1" cy="233.5" r="5.0"/><circle cx="910.7" cy="261.0" r="5.0"/><circle cx="913.2" cy="266.4" r="5.0"/><circle cx="915.2" cy="270.3" r="5.0"/><circle cx="916.1" cy="273.0" r="5.0"/><circle cx="917.6" cy="277.2" r="5.0"/><circle cx="307.1" cy="298.0" r="5.0"/><circle cx="301.0" cy="312.4" r="5.0"/><circle cx="299.7" cy="316.9" r="5.0"/><circle cx="297.7" cy="322.5" r="5.0"/><circle cx="295.7" cy="326.9" r="5.0"/><circle cx="294.7" cy="331.0" r="5.0"/><circle cx="295.0" cy="335.6" r="5.0"/><circle cx="293.1" cy="337.4" r="5.0"/><circle cx="293.0" cy="343.4" r="5.0"/><circle cx="291.4" cy="346.7" r="5.0"/><circle cx="289.1" cy="361.2" r="5.0"/><circle cx="288.3" cy="363.9" r="5.0"/><circle cx="286.6" cy="376.7" r="5.0"/><circle cx="285.8" cy="383.0" r="5.0"/><circle cx="284.7" cy="386.3" r="5.0"/><circle cx="285.4" cy="390.1" r="5.0"/><circle cx="285.2" cy="393.9" r="5.0"/><circle cx="283.8" cy="398.0" r="5.0"/><circle cx="283.6" cy="403.5" r="5.0"/><circle cx="283.9" cy="407.6" r="5.0"/><circle cx="282.9" cy="412.7" r="5.0"/><circle cx="282.8" cy="417.1" r="5.0"/><circle cx="284.0" cy="420.6" r="5.0"/><circle cx="282.8" cy="424.1" r="5.0"/><circle cx="283.8" cy="427.1" r="5.0"/><circle cx="284.3" cy="432.6" r="5.0"/><circle cx="283.9" cy="435.9" r="5.0"/><circle cx="283.8" cy="440.5" r="5.0"/><circle cx="286.2" cy="459.2" r="5.0"/><circle cx="286.9" cy="461.3" r="5.0"/><circle cx="287.7" cy="473.1" r="5.0"/><circle cx="289.6" cy="478.8" r="5.0"/><circle cx="289.4" cy="483.6" r="5.0"/><circle cx="927.0" cy="298.8" r="5.0"/><circle cx="928.6" cy="301.8" r="5.0"/><circle cx="931.0" cy="306.9" r="5.0"/><circle cx="930.9" cy="311.3" r="5.0"/><circle cx="933.6" cy="314.7" r="5.0"/><circle cx="933.6" cy="319.3" r="5.0"/><circle cx="935.0" cy="320.7" r="5.0"/><circle cx="935.9" cy="327.7" r="5.0"/><circle cx="937.6" cy="329.4" r="5.0"/><circle cx="937.6" cy="333.4" r="5.0"/><circle cx="939.4" cy="339.3" r="5.0"/><circle cx="940.1" cy="341.5" r="5.0"/><circle cx="942.5" cy="347.2" r="5.0"/><circle cx="942.1" cy="351.9" r="5.0"/><circle cx="943.6" cy="355.5" r="5.0"/><circle cx="944.6" cy="360.0" r="5.0"/><circle cx="945.5" cy="363.9" r="5.0"/><circle cx="945.0" cy="367.8" r="5.0"/><circle cx="946.3" cy="372.0" r="5.0"/><circle cx="946.7" cy="376.6" r="5.0"/><circle cx="947.2" cy="378.9" r="5.0"/><circle cx="947.1" cy="382.8" r="5.0"/><circle cx="947.9" cy="386.7" r="5.0"/><circle cx="948.3" cy="391.1" r="5.0"/><circle cx="948.7" cy="396.4" r="5.0"/><circle cx="949.1" cy="401.6" r="5.0"/><circle cx="948.4" cy="405.8" r="5.0"/><circle cx="949.0" cy="435.6" r="5.0"/><circle cx="949.1" cy="440.6" r="5.0"/><circle cx="948.4" cy="443.4" r="5.0"/><circle cx="949.2" cy="446.5" r="5.0"/><circle cx="948.1" cy="452.2" r="5.0"/><circle cx="946.5" cy="456.1" r="5.0"/><circle cx="947.1" cy="461.3" r="5.0"/><circle cx="945.9" cy="465.4" r="5.0"/><circle cx="945.9" cy="468.0" r="5.0"/><circle cx="946.1" cy="470.9" r="5.0"/><circle cx="944.8" cy="476.6" r="5.0"/><circle cx="943.3" cy="481.2" r="5.0"/><circle cx="942.8" cy="484.1" r="5.0"/><circle cx="295.5" cy="504.1" r="5.0"/><circle cx="295.6" cy="510.1" r="5.0"/><circle cx="297.5" cy="514.7" r="5.0"/><circle cx="298.3" cy="518.5" r="5.0"/><circle cx="299.0" cy="521.7" r="5.0"/><circle cx="300.4" cy="525.2" r="5.0"/><circle cx="303.7" cy="531.6" r="5.0"/><circle cx="313.3" cy="555.1" r="5.0"/><circle cx="315.4" cy="559.2" r="5.0"/><circle cx="315.4" cy="561.1" r="5.0"/><circle cx="317.2" cy="564.6" r="5.0"/><circle cx="319.6" cy="571.1" r="5.0"/><circle cx="321.5" cy="573.7" r="5.0"/><circle cx="323.5" cy="575.5" r="5.0"/><circle cx="325.8" cy="580.3" r="5.0"/><circle cx="326.7" cy="583.3" r="5.0"/><circle cx="329.6" cy="588.4" r="5.0"/><circle cx="332.5" cy="592.4" r="5.0"/><circle cx="332.6" cy="594.3" r="5.0"/><circle cx="337.5" cy="599.6" r="5.0"/><circle cx="339.2" cy="602.3" r="5.0"/><circle cx="339.6" cy="605.1" r="5.0"/><circle cx="343.6" cy="610.6" r="5.0"/><circle cx="344.9" cy="612.3" r="5.0"/><circle cx="347.1" cy="614.9" r="5.0"/><circle cx="351.9" cy="619.7" r="5.0"/><circle cx="352.0" cy="621.9" r="5.0"/><circle cx="355.9" cy="626.6" r="5.0"/><circle cx="357.8" cy="628.7" r="5.0"/><circle cx="362.0" cy="632.4" r="5.0"/><circle cx="364.9" cy="636.2" r="5.0"/><circle cx="367.2" cy="639.5" r="5.0"/><circle cx="370.4" cy="642.4" r="5.0"/><circle cx="372.9" cy="646.3" r="5.0"/><circle cx="375.4" cy="649.0" r="5.0"/><circle cx="377.6" cy="649.6" r="5.0"/><circle cx="380.3" cy="652.8" r="5.0"/><circle cx="382.6" cy="656.7" r="5.0"/><circle cx="387.4" cy="659.6" r="5.0"/><circle cx="390.8" cy="662.5" r="5.0"/><circle cx="392.5" cy="665.1" r="5.0"/><circle cx="396.6" cy="668.3" r="5.0"/><circle cx="399.6" cy="671.2" r="5.0"/><circle cx="400.8" cy="672.7" r="5.0"/><circle cx="405.2" cy="675.3" r="5.0"/><circle cx="408.6" cy="679.5" r="5.0"/><circle cx="409.9" cy="680.7" r="5.0"/><circle cx="414.9" cy="683.5" r="5.0"/><circle cx="417.5" cy="686.5" r="5.0"/><circle cx="420.2" cy="687.5" r="5.0"/><circle cx="938.6" cy="506.3" r="5.0"/><circle cx="936.6" cy="508.4" r="5.0"/><circle cx="935.6" cy="513.1" r="5.0"/><circle cx="934.8" cy="517.3" r="5.0"/><circle cx="927.7" cy="538.9" r="5.0"/><circle cx="925.9" cy="542.9" r="5.0"/><circle cx="917.6" cy="562.2" r="5.0"/><circle cx="914.8" cy="567.8" r="5.0"/><circle cx="904.9" cy="586.7" r="5.0"/><circle cx="905.0" cy="586.4" r="5.0"/><circle cx="894.4" cy="603.0" r="5.0"/><circle cx="891.3" cy="606.8" r="5.0"/><circle cx="890.2" cy="608.6" r="5.0"/><circle cx="878.6" cy="625.0" r="5.0"/><circle cx="876.5" cy="627.1" r="5.0"/><circle cx="873.3" cy="630.6" r="5.0"/><circle cx="871.1" cy="634.0" r="5.0"/><circle cx="867.2" cy="637.6" r="5.0"/><circle cx="864.7" cy="640.4" r="5.0"/><circle cx="856.6" cy="650.2" r="5.0"/><circle cx="854.2" cy="652.0" r="5.0"/><circle cx="851.2" cy="654.2" r="5.0"/><circle cx="847.5" cy="657.7" r="5.0"/><circle cx="846.1" cy="660.1" r="5.0"/><circle cx="843.0" cy="663.9" r="5.0"/><circle cx="838.6" cy="667.7" r="5.0"/><circle cx="837.1" cy="669.3" r="5.0"/><circle cx="831.7" cy="672.7" r="5.0"/><circle cx="830.0" cy="673.2" r="5.0"/><circle cx="826.3" cy="677.5" r="5.0"/><circle cx="822.8" cy="681.1" r="5.0"/><circle cx="818.6" cy="683.5" r="5.0"/><circle cx="816.4" cy="685.1" r="5.0"/><circle cx="813.5" cy="687.6" r="5.0"/><circle cx="809.3" cy="690.0" r="5.0"/><circle cx="454.1" cy="709.3" r="5.0"/><circle cx="457.6" cy="710.4" r="5.0"/><circle cx="462.5" cy="713.7" r="5.0"/><circle cx="463.6" cy="714.5" r="5.0"/><circle cx="470.0" cy="716.9" r="5.0"/><circle cx="472.9" cy="719.6" r="5.0"/><circle cx="476.5" cy="720.4" r="5.0"/><circle cx="480.1" cy="722.1" r="5.0"/><circle cx="482.8" cy="723.8" r="5.0"/><circle cx="492.5" cy="728.7" r="5.0"/><circle cx="494.7" cy="728.8" r="5.0"/><circle cx="498.4" cy="730.8" r="5.0"/><circle cx="502.9" cy="732.0" r="5.0"/><circle cx="508.1" cy="733.4" r="5.0"/><circle cx="510.2" cy="734.9" r="5.0"/><circle cx="514.7" cy="736.6" r="5.0"/><circle cx="518.9" cy="736.8" r="5.0"/><circle cx="523.5" cy="738.9" r="5.0"/><circle cx="528.1" cy="740.0" r="5.0"/><circle cx="541.1" cy="743.2" r="5.0"/><circle cx="545.4" cy="743.3" r="5.0"/><circle cx="547.3" cy="744.2" r="5.0"/><circle cx="553.0" cy="745.6" r="5.0"/><circle cx="557.4" cy="746.0" r="5.0"/><circle cx="561.7" cy="746.9" r="5.0"/><circle cx="563.6" cy="746.6" r="5.0"/><circle cx="568.7" cy="748.2" r="5.0"/><circle cx="573.1" cy="749.0" r="5.0"/><circle cx="587.1" cy="749.9" r="5.0"/><circle cx="590.3" cy="750.4" r="5.0"/><circle cx="593.4" cy="751.4" r="5.0"/><circle cx="598.0" cy="752.0" r="5.0"/><circle cx="602.1" cy="752.0" r="5.0"/><circle cx="607.8" cy="751.4" r="5.0"/><circle cx="610.7" cy="751.6" r="5.0"/><circle cx="624.5" cy="752.0" r="5.0"/><circle cx="627.6" cy="751.4" r="5.0"/><circle cx="632.8" cy="751.9" r="5.0"/><circle cx="636.3" cy="751.0" r="5.0"/><circle cx="641.7" cy="751.6" r="5.0"/><circle cx="644.4" cy="751.4" r="5.0"/><circle cx="648.7" cy="750.0" r="5.0"/><circle cx="654.7" cy="749.2" r="5.0"/><circle cx="658.1" cy="749.6" r="5.0"/><circle cx="661.9" cy="748.7" r="5.0"/><circle cx="665.4" cy="748.9" r="5.0"/><circle cx="669.8" cy="746.6" r="5.0"/><circle cx="681.6" cy="745.2" r="5.0"/><circle cx="686.6" cy="744.9" r="5.0"/><circle cx="689.8" cy="743.5" r="5.0"/><circle cx="695.7" cy="742.1" r="5.0"/><circle cx="704.1" cy="740.0" r="5.0"/><circle cx="709.1" cy="738.9" r="5.0"/><circle cx="715.6" cy="736.5" r="5.0"/><circle cx="719.0" cy="735.9" r="5.0"/><circle cx="728.0" cy="733.1" r="5.0"/><circle cx="732.9" cy="730.0" r="5.0"/><circle cx="735.0" cy="729.1" r="5.0"/><circle cx="740.8" cy="726.9" r="5.0"/><circle cx="743.7" cy="727.0" r="5.0"/><circle cx="746.6" cy="724.4" r="5.0"/><circle cx="751.4" cy="723.6" r="5.0"/><circle cx="763.9" cy="716.5" r="5.0"/><circle cx="768.6" cy="714.8" r="5.0"/><circle cx="772.5" cy="714.0" r="5.0"/><circle cx="778.2" cy="710.6" r="5.0"/><circle cx="780.8" cy="708.1" r="5.0"/><circle cx="766.4" cy="716.9" r="5.0"/><circle cx="769.5" cy="715.5" r="5.0"/><circle cx="774.2" cy="712.9" r="5.0"/><circle cx="776.1" cy="712.0" r="5.0"/><circle cx="779.0" cy="708.9" r="5.0"/></g><g fill="#1c9ee4" fill-opacity="0.62" stroke="#1c9ee4" stroke-opacity="0.8" stroke-width="1"><circle cx="389.0" cy="212.0" r="5.0"/><circle cx="384.3" cy="216.0" r="5.0"/><circle cx="382.7" cy="217.2" r="5.0"/><circle cx="380.7" cy="221.4" r="5.0"/><circle cx="376.8" cy="225.6" r="5.0"/><circle cx="373.9" cy="227.6" r="5.0"/><circle cx="361.4" cy="247.3" r="5.0"/><circle cx="360.7" cy="247.1" r="5.0"/><circle cx="349.9" cy="265.7" r="5.0"/><circle cx="346.8" cy="269.3" r="5.0"/><circle cx="345.8" cy="271.6" r="5.0"/><circle cx="344.7" cy="275.7" r="5.0"/><circle cx="342.3" cy="278.0" r="5.0"/><circle cx="389.5" cy="211.1" r="5.0"/><circle cx="392.4" cy="208.3" r="5.0"/><circle cx="396.2" cy="204.2" r="5.0"/><circle cx="397.2" cy="201.3" r="5.0"/><circle cx="401.9" cy="198.4" r="5.0"/><circle cx="410.7" cy="190.0" r="5.0"/><circle cx="414.2" cy="187.7" r="5.0"/><circle cx="417.1" cy="184.1" r="5.0"/><circle cx="420.6" cy="181.8" r="5.0"/><circle cx="423.4" cy="179.9" r="5.0"/><circle cx="426.9" cy="177.0" r="5.0"/><circle cx="429.3" cy="175.2" r="5.0"/><circle cx="432.8" cy="171.9" r="5.0"/><circle cx="436.6" cy="168.6" r="5.0"/><circle cx="440.1" cy="165.7" r="5.0"/><circle cx="444.1" cy="163.0" r="5.0"/><circle cx="446.5" cy="162.1" r="5.0"/><circle cx="449.0" cy="159.3" r="5.0"/><circle cx="454.0" cy="156.6" r="5.0"/><circle cx="458.6" cy="155.2" r="5.0"/><circle cx="460.9" cy="152.1" r="5.0"/><circle cx="465.1" cy="150.0" r="5.0"/><circle cx="468.5" cy="149.4" r="5.0"/><circle cx="472.7" cy="146.4" r="5.0"/><circle cx="476.1" cy="144.0" r="5.0"/><circle cx="480.1" cy="142.4" r="5.0"/><circle cx="483.2" cy="140.7" r="5.0"/><circle cx="485.5" cy="140.5" r="5.0"/><circle cx="498.4" cy="135.0" r="5.0"/><circle cx="503.8" cy="132.9" r="5.0"/><circle cx="507.0" cy="130.8" r="5.0"/><circle cx="511.2" cy="129.1" r="5.0"/><circle cx="513.5" cy="128.5" r="5.0"/><circle cx="519.5" cy="125.8" r="5.0"/><circle cx="523.3" cy="125.2" r="5.0"/><circle cx="526.0" cy="124.0" r="5.0"/><circle cx="530.7" cy="122.5" r="5.0"/><circle cx="540.4" cy="121.1" r="5.0"/><circle cx="543.8" cy="119.0" r="5.0"/><circle cx="550.0" cy="117.6" r="5.0"/><circle cx="552.3" cy="117.5" r="5.0"/><circle cx="569.0" cy="114.5" r="5.0"/><circle cx="572.3" cy="113.5" r="5.0"/><circle cx="591.2" cy="112.0" r="5.0"/><circle cx="596.0" cy="110.5" r="5.0"/><circle cx="599.8" cy="111.5" r="5.0"/><circle cx="602.9" cy="111.5" r="5.0"/><circle cx="609.5" cy="111.5" r="5.0"/><circle cx="614.0" cy="111.1" r="5.0"/><circle cx="616.3" cy="111.2" r="5.0"/><circle cx="620.3" cy="110.8" r="5.0"/><circle cx="626.8" cy="111.2" r="5.0"/><circle cx="630.7" cy="110.4" r="5.0"/><circle cx="635.2" cy="111.1" r="5.0"/><circle cx="638.4" cy="110.7" r="5.0"/><circle cx="641.1" cy="111.3" r="5.0"/><circle cx="646.5" cy="111.8" r="5.0"/><circle cx="651.4" cy="112.3" r="5.0"/><circle cx="653.7" cy="113.4" r="5.0"/><circle cx="658.3" cy="112.8" r="5.0"/><circle cx="663.0" cy="114.3" r="5.0"/><circle cx="668.3" cy="115.5" r="5.0"/><circle cx="671.3" cy="114.8" r="5.0"/><circle cx="675.5" cy="116.2" r="5.0"/><circle cx="684.9" cy="118.3" r="5.0"/><circle cx="688.0" cy="119.8" r="5.0"/><circle cx="694.0" cy="121.2" r="5.0"/><circle cx="696.0" cy="121.2" r="5.0"/><circle cx="702.3" cy="122.2" r="5.0"/><circle cx="703.4" cy="123.4" r="5.0"/><circle cx="711.5" cy="126.4" r="5.0"/><circle cx="715.6" cy="127.4" r="5.0"/><circle cx="720.0" cy="129.1" r="5.0"/><circle cx="725.9" cy="130.7" r="5.0"/><circle cx="728.6" cy="131.4" r="5.0"/><circle cx="732.6" cy="133.6" r="5.0"/><circle cx="735.9" cy="135.1" r="5.0"/><circle cx="739.4" cy="137.2" r="5.0"/><circle cx="743.5" cy="137.2" r="5.0"/><circle cx="748.3" cy="140.4" r="5.0"/><circle cx="751.3" cy="141.1" r="5.0"/><circle cx="754.6" cy="143.9" r="5.0"/><circle cx="764.4" cy="148.8" r="5.0"/><circle cx="769.5" cy="150.5" r="5.0"/><circle cx="770.9" cy="151.5" r="5.0"/><circle cx="775.5" cy="156.0" r="5.0"/><circle cx="779.3" cy="156.5" r="5.0"/><circle cx="781.3" cy="158.4" r="5.0"/><circle cx="787.0" cy="162.5" r="5.0"/><circle cx="790.7" cy="164.0" r="5.0"/><circle cx="765.8" cy="148.4" r="5.0"/><circle cx="768.6" cy="151.7" r="5.0"/><circle cx="774.0" cy="154.0" r="5.0"/><circle cx="778.2" cy="155.7" r="5.0"/><circle cx="781.7" cy="158.5" r="5.0"/><circle cx="784.6" cy="160.8" r="5.0"/><circle cx="788.4" cy="164.2" r="5.0"/><circle cx="792.5" cy="166.6" r="5.0"/><circle cx="794.9" cy="167.4" r="5.0"/><circle cx="797.8" cy="170.6" r="5.0"/><circle cx="809.1" cy="178.1" r="5.0"/><circle cx="810.3" cy="180.3" r="5.0"/><circle cx="815.2" cy="183.4" r="5.0"/><circle cx="817.4" cy="185.6" r="5.0"/><circle cx="820.3" cy="187.6" r="5.0"/><circle cx="824.1" cy="191.7" r="5.0"/><circle cx="828.4" cy="194.1" r="5.0"/><circle cx="830.9" cy="196.7" r="5.0"/><circle cx="832.6" cy="200.0" r="5.0"/><circle cx="837.5" cy="203.0" r="5.0"/><circle cx="838.1" cy="205.4" r="5.0"/><circle cx="842.6" cy="209.6" r="5.0"/><circle cx="844.5" cy="211.8" r="5.0"/><circle cx="848.9" cy="216.2" r="5.0"/><circle cx="849.3" cy="217.8" r="5.0"/><circle cx="852.9" cy="221.8" r="5.0"/><circle cx="855.6" cy="224.1" r="5.0"/><circle cx="859.4" cy="228.5" r="5.0"/><circle cx="860.6" cy="230.9" r="5.0"/><circle cx="864.0" cy="234.0" r="5.0"/><circle cx="866.1" cy="237.3" r="5.0"/><circle cx="868.6" cy="242.6" r="5.0"/><circle cx="871.4" cy="246.5" r="5.0"/><circle cx="872.7" cy="247.8" r="5.0"/><circle cx="875.0" cy="252.2" r="5.0"/><circle cx="878.7" cy="256.6" r="5.0"/><circle cx="879.3" cy="259.3" r="5.0"/><circle cx="882.4" cy="264.3" r="5.0"/><circle cx="883.0" cy="265.6" r="5.0"/><circle cx="885.4" cy="270.2" r="5.0"/><circle cx="889.4" cy="274.4" r="5.0"/><circle cx="891.2" cy="278.6" r="5.0"/><circle cx="332.2" cy="302.0" r="5.0"/><circle cx="329.1" cy="306.1" r="5.0"/><circle cx="328.8" cy="310.5" r="5.0"/><circle cx="326.9" cy="312.7" r="5.0"/><circle cx="325.7" cy="319.1" r="5.0"/><circle cx="324.4" cy="322.7" r="5.0"/><circle cx="322.4" cy="327.1" r="5.0"/><circle cx="321.5" cy="331.3" r="5.0"/><circle cx="319.6" cy="333.6" r="5.0"/><circle cx="320.1" cy="337.5" r="5.0"/><circle cx="318.6" cy="343.4" r="5.0"/><circle cx="316.3" cy="346.1" r="5.0"/><circle cx="312.4" cy="367.3" r="5.0"/><circle cx="312.7" cy="371.3" r="5.0"/><circle cx="312.1" cy="377.0" r="5.0"/><circle cx="310.9" cy="381.9" r="5.0"/><circle cx="310.6" cy="384.1" r="5.0"/><circle cx="309.5" cy="389.4" r="5.0"/><circle cx="309.3" cy="394.0" r="5.0"/><circle cx="309.8" cy="398.1" r="5.0"/><circle cx="308.7" cy="413.3" r="5.0"/><circle cx="307.8" cy="418.7" r="5.0"/><circle cx="308.4" cy="422.2" r="5.0"/><circle cx="308.8" cy="428.1" r="5.0"/><circle cx="308.3" cy="430.6" r="5.0"/><circle cx="308.5" cy="435.6" r="5.0"/><circle cx="308.6" cy="440.1" r="5.0"/><circle cx="309.4" cy="445.1" r="5.0"/><circle cx="310.3" cy="448.9" r="5.0"/><circle cx="312.5" cy="463.2" r="5.0"/><circle cx="311.7" cy="466.7" r="5.0"/><circle cx="312.9" cy="472.1" r="5.0"/><circle cx="313.9" cy="475.6" r="5.0"/><circle cx="314.4" cy="479.9" r="5.0"/><circle cx="314.8" cy="482.5" r="5.0"/><circle cx="900.1" cy="300.0" r="5.0"/><circle cx="902.3" cy="302.5" r="5.0"/><circle cx="903.9" cy="308.0" r="5.0"/><circle cx="907.4" cy="320.0" r="5.0"/><circle cx="909.1" cy="324.5" r="5.0"/><circle cx="911.4" cy="327.3" r="5.0"/><circle cx="911.2" cy="331.9" r="5.0"/><circle cx="913.3" cy="336.0" r="5.0"/><circle cx="914.2" cy="339.8" r="5.0"/><circle cx="915.7" cy="343.4" r="5.0"/><circle cx="916.3" cy="348.8" r="5.0"/><circle cx="916.7" cy="352.2" r="5.0"/><circle cx="917.9" cy="356.4" r="5.0"/><circle cx="918.4" cy="361.2" r="5.0"/><circle cx="919.0" cy="362.5" r="5.0"/><circle cx="919.8" cy="367.6" r="5.0"/><circle cx="920.0" cy="371.8" r="5.0"/><circle cx="921.5" cy="376.6" r="5.0"/><circle cx="921.7" cy="379.4" r="5.0"/><circle cx="922.1" cy="385.0" r="5.0"/><circle cx="923.8" cy="388.4" r="5.0"/><circle cx="922.9" cy="393.4" r="5.0"/><circle cx="923.4" cy="395.8" r="5.0"/><circle cx="923.4" cy="401.6" r="5.0"/><circle cx="924.8" cy="405.3" r="5.0"/><circle cx="924.3" cy="409.2" r="5.0"/><circle cx="923.5" cy="436.8" r="5.0"/><circle cx="923.5" cy="440.1" r="5.0"/><circle cx="924.0" cy="444.9" r="5.0"/><circle cx="923.1" cy="447.5" r="5.0"/><circle cx="922.9" cy="451.3" r="5.0"/><circle cx="922.8" cy="456.2" r="5.0"/><circle cx="922.3" cy="460.2" r="5.0"/><circle cx="920.9" cy="464.3" r="5.0"/><circle cx="920.4" cy="468.3" r="5.0"/><circle cx="918.6" cy="473.9" r="5.0"/><circle cx="918.6" cy="476.8" r="5.0"/><circle cx="917.6" cy="481.7" r="5.0"/><circle cx="321.3" cy="504.1" r="5.0"/><circle cx="321.5" cy="509.5" r="5.0"/><circle cx="323.7" cy="514.2" r="5.0"/><circle cx="324.3" cy="518.1" r="5.0"/><circle cx="326.4" cy="522.9" r="5.0"/><circle cx="328.7" cy="527.0" r="5.0"/><circle cx="328.8" cy="529.9" r="5.0"/><circle cx="331.0" cy="532.6" r="5.0"/><circle cx="332.9" cy="537.9" r="5.0"/><circle cx="335.0" cy="542.1" r="5.0"/><circle cx="335.5" cy="546.4" r="5.0"/><circle cx="342.7" cy="558.5" r="5.0"/><circle cx="343.8" cy="561.3" r="5.0"/><circle cx="346.0" cy="564.7" r="5.0"/><circle cx="348.3" cy="568.5" r="5.0"/><circle cx="350.5" cy="574.5" r="5.0"/><circle cx="352.8" cy="577.8" r="5.0"/><circle cx="355.5" cy="581.4" r="5.0"/><circle cx="356.3" cy="583.1" r="5.0"/><circle cx="357.8" cy="587.5" r="5.0"/><circle cx="362.5" cy="591.7" r="5.0"/><circle cx="364.2" cy="596.6" r="5.0"/><circle cx="366.5" cy="599.3" r="5.0"/><circle cx="369.1" cy="603.7" r="5.0"/><circle cx="371.3" cy="606.1" r="5.0"/><circle cx="375.5" cy="609.5" r="5.0"/><circle cx="376.2" cy="612.4" r="5.0"/><circle cx="380.0" cy="615.1" r="5.0"/><circle cx="382.1" cy="619.7" r="5.0"/><circle cx="385.5" cy="622.7" r="5.0"/><circle cx="387.6" cy="624.0" r="5.0"/><circle cx="387.4" cy="625.7" r="5.0"/><circle cx="390.8" cy="629.3" r="5.0"/><circle cx="393.5" cy="630.4" r="5.0"/><circle cx="397.6" cy="635.1" r="5.0"/><circle cx="399.8" cy="637.3" r="5.0"/><circle cx="403.5" cy="640.0" r="5.0"/><circle cx="406.1" cy="643.5" r="5.0"/><circle cx="409.2" cy="645.6" r="5.0"/><circle cx="411.2" cy="649.1" r="5.0"/><circle cx="415.4" cy="651.6" r="5.0"/><circle cx="418.5" cy="654.4" r="5.0"/><circle cx="422.0" cy="656.5" r="5.0"/><circle cx="425.2" cy="661.2" r="5.0"/><circle cx="429.0" cy="663.1" r="5.0"/><circle cx="433.7" cy="666.7" r="5.0"/><circle cx="436.2" cy="669.5" r="5.0"/><circle cx="443.2" cy="672.7" r="5.0"/><circle cx="441.4" cy="671.6" r="5.0"/><circle cx="456.9" cy="681.2" r="5.0"/><circle cx="459.6" cy="684.2" r="5.0"/><circle cx="462.7" cy="684.6" r="5.0"/><circle cx="466.0" cy="687.6" r="5.0"/><circle cx="470.7" cy="690.4" r="5.0"/><circle cx="472.5" cy="691.8" r="5.0"/><circle cx="912.8" cy="504.7" r="5.0"/><circle cx="910.6" cy="508.6" r="5.0"/><circle cx="909.1" cy="514.6" r="5.0"/><circle cx="908.4" cy="518.7" r="5.0"/><circle cx="907.1" cy="522.6" r="5.0"/><circle cx="904.6" cy="525.3" r="5.0"/><circle cx="904.2" cy="531.1" r="5.0"/><circle cx="902.0" cy="533.2" r="5.0"/><circle cx="897.5" cy="545.4" r="5.0"/><circle cx="895.9" cy="548.4" r="5.0"/><circle cx="893.4" cy="553.4" r="5.0"/><circle cx="891.3" cy="555.9" r="5.0"/><circle cx="890.0" cy="562.2" r="5.0"/><circle cx="888.2" cy="565.6" r="5.0"/><circle cx="885.5" cy="569.9" r="5.0"/><circle cx="884.8" cy="571.4" r="5.0"/><circle cx="876.5" cy="584.3" r="5.0"/><circle cx="874.3" cy="587.9" r="5.0"/><circle cx="870.7" cy="592.9" r="5.0"/><circle cx="869.5" cy="594.7" r="5.0"/><circle cx="866.6" cy="598.5" r="5.0"/><circle cx="865.0" cy="602.0" r="5.0"/><circle cx="851.5" cy="617.2" r="5.0"/><circle cx="851.4" cy="616.9" r="5.0"/><circle cx="839.9" cy="632.0" r="5.0"/><circle cx="836.1" cy="634.1" r="5.0"/><circle cx="834.2" cy="636.7" r="5.0"/><circle cx="830.7" cy="639.1" r="5.0"/><circle cx="827.3" cy="642.8" r="5.0"/><circle cx="824.5" cy="645.4" r="5.0"/><circle cx="820.5" cy="648.5" r="5.0"/><circle cx="818.0" cy="652.5" r="5.0"/><circle cx="814.4" cy="654.9" r="5.0"/><circle cx="810.6" cy="657.2" r="5.0"/><circle cx="808.0" cy="659.9" r="5.0"/><circle cx="805.0" cy="662.6" r="5.0"/><circle cx="801.9" cy="664.3" r="5.0"/><circle cx="797.7" cy="667.2" r="5.0"/><circle cx="794.3" cy="670.0" r="5.0"/><circle cx="791.1" cy="671.4" r="5.0"/><circle cx="788.7" cy="674.9" r="5.0"/><circle cx="784.2" cy="677.2" r="5.0"/><circle cx="779.2" cy="679.8" r="5.0"/><circle cx="776.1" cy="681.7" r="5.0"/><circle cx="774.2" cy="682.6" r="5.0"/><circle cx="770.2" cy="686.4" r="5.0"/><circle cx="766.0" cy="687.1" r="5.0"/><circle cx="761.7" cy="690.3" r="5.0"/><circle cx="759.0" cy="691.0" r="5.0"/><circle cx="517.2" cy="709.7" r="5.0"/><circle cx="520.6" cy="711.0" r="5.0"/><circle cx="526.0" cy="712.9" r="5.0"/><circle cx="528.5" cy="714.6" r="5.0"/><circle cx="531.7" cy="715.2" r="5.0"/><circle cx="537.8" cy="717.4" r="5.0"/><circle cx="541.6" cy="717.2" r="5.0"/><circle cx="543.3" cy="717.9" r="5.0"/><circle cx="549.6" cy="720.0" r="5.0"/><circle cx="551.5" cy="719.2" r="5.0"/><circle cx="556.6" cy="721.2" r="5.0"/><circle cx="561.3" cy="721.7" r="5.0"/><circle cx="564.5" cy="723.0" r="5.0"/><circle cx="567.8" cy="723.6" r="5.0"/><circle cx="582.1" cy="724.1" r="5.0"/><circle cx="584.4" cy="724.6" r="5.0"/><circle cx="590.9" cy="725.8" r="5.0"/><circle cx="594.0" cy="725.3" r="5.0"/><circle cx="597.4" cy="726.1" r="5.0"/><circle cx="601.5" cy="725.8" r="5.0"/><circle cx="606.2" cy="726.5" r="5.0"/><circle cx="609.5" cy="727.3" r="5.0"/><circle cx="616.2" cy="727.4" r="5.0"/><circle cx="617.9" cy="726.5" r="5.0"/><circle cx="624.2" cy="727.2" r="5.0"/><circle cx="627.9" cy="725.9" r="5.0"/><circle cx="631.7" cy="725.7" r="5.0"/><circle cx="635.4" cy="726.7" r="5.0"/><circle cx="640.7" cy="725.7" r="5.0"/><circle cx="642.1" cy="725.5" r="5.0"/><circle cx="647.9" cy="725.5" r="5.0"/><circle cx="650.9" cy="724.8" r="5.0"/><circle cx="657.0" cy="724.5" r="5.0"/><circle cx="660.4" cy="723.9" r="5.0"/><circle cx="664.9" cy="723.0" r="5.0"/><circle cx="668.6" cy="722.1" r="5.0"/><circle cx="673.6" cy="721.2" r="5.0"/><circle cx="675.9" cy="720.4" r="5.0"/><circle cx="690.5" cy="716.9" r="5.0"/><circle cx="690.5" cy="718.1" r="5.0"/><circle cx="709.8" cy="712.0" r="5.0"/><circle cx="714.6" cy="711.4" r="5.0"/><circle cx="716.3" cy="710.4" r="5.0"/></g><g fill="#ff2200" fill-opacity="0.62" stroke="#ff2200" stroke-opacity="0.8" stroke-width="1"><circle cx="835.5" cy="434.2" r="5.0"/><circle cx="836.6" cy="437.7" r="5.0"/><circle cx="836.3" cy="439.9" r="5.0"/><circle cx="836.1" cy="442.7" r="5.0"/><circle cx="834.7" cy="446.4" r="5.0"/><circle cx="834.0" cy="451.6" r="5.0"/><circle cx="834.0" cy="454.5" r="5.0"/><circle cx="832.8" cy="457.2" r="5.0"/><circle cx="832.2" cy="461.0" r="5.0"/><circle cx="830.9" cy="465.8" r="5.0"/><circle cx="830.8" cy="468.5" r="5.0"/><circle cx="829.2" cy="472.7" r="5.0"/><circle cx="828.7" cy="474.9" r="5.0"/><circle cx="828.0" cy="479.8" r="5.0"/><circle cx="827.6" cy="483.6" r="5.0"/><circle cx="819.5" cy="502.4" r="5.0"/><circle cx="817.6" cy="506.4" r="5.0"/><circle cx="817.9" cy="509.4" r="5.0"/><circle cx="815.1" cy="511.6" r="5.0"/><circle cx="813.0" cy="517.0" r="5.0"/><circle cx="812.7" cy="519.4" r="5.0"/><circle cx="810.4" cy="521.1" r="5.0"/><circle cx="807.9" cy="526.0" r="5.0"/><circle cx="806.2" cy="530.0" r="5.0"/><circle cx="805.4" cy="533.0" r="5.0"/><circle cx="802.8" cy="535.7" r="5.0"/><circle cx="801.5" cy="536.6" r="5.0"/><circle cx="799.5" cy="541.1" r="5.0"/><circle cx="797.4" cy="543.0" r="5.0"/><circle cx="793.9" cy="547.4" r="5.0"/><circle cx="792.7" cy="551.1" r="5.0"/><circle cx="791.8" cy="553.0" r="5.0"/><circle cx="789.4" cy="555.5" r="5.0"/><circle cx="786.3" cy="559.5" r="5.0"/><circle cx="784.7" cy="559.5" r="5.0"/><circle cx="781.4" cy="563.7" r="5.0"/><circle cx="780.3" cy="565.2" r="5.0"/><circle cx="776.9" cy="570.2" r="5.0"/><circle cx="775.5" cy="570.7" r="5.0"/><circle cx="772.5" cy="574.9" r="5.0"/><circle cx="769.3" cy="575.9" r="5.0"/><circle cx="766.2" cy="580.3" r="5.0"/><circle cx="763.9" cy="582.0" r="5.0"/><circle cx="761.8" cy="583.2" r="5.0"/><circle cx="759.6" cy="586.8" r="5.0"/><circle cx="755.4" cy="588.4" r="5.0"/><circle cx="753.6" cy="590.0" r="5.0"/><circle cx="750.2" cy="593.4" r="5.0"/><circle cx="747.2" cy="596.0" r="5.0"/><circle cx="745.6" cy="596.7" r="5.0"/><circle cx="743.0" cy="599.2" r="5.0"/><circle cx="739.0" cy="601.5" r="5.0"/><circle cx="735.4" cy="604.3" r="5.0"/><circle cx="732.1" cy="605.4" r="5.0"/><circle cx="729.9" cy="607.7" r="5.0"/><circle cx="725.1" cy="609.3" r="5.0"/><circle cx="724.6" cy="610.6" r="5.0"/><circle cx="718.7" cy="613.0" r="5.0"/><circle cx="717.1" cy="613.9" r="5.0"/><circle cx="713.2" cy="617.0" r="5.0"/><circle cx="710.0" cy="618.2" r="5.0"/><circle cx="708.1" cy="617.9" r="5.0"/><circle cx="703.5" cy="621.7" r="5.0"/><circle cx="701.6" cy="620.7" r="5.0"/><circle cx="696.0" cy="623.4" r="5.0"/><circle cx="693.3" cy="624.4" r="5.0"/><circle cx="690.5" cy="626.8" r="5.0"/><circle cx="688.1" cy="627.6" r="5.0"/><circle cx="685.0" cy="627.2" r="5.0"/><circle cx="681.6" cy="629.4" r="5.0"/><circle cx="676.5" cy="631.3" r="5.0"/><circle cx="672.4" cy="630.9" r="5.0"/><circle cx="669.8" cy="631.6" r="5.0"/><circle cx="665.5" cy="632.5" r="5.0"/><circle cx="661.9" cy="634.7" r="5.0"/><circle cx="658.2" cy="633.8" r="5.0"/><circle cx="655.0" cy="635.5" r="5.0"/><circle cx="652.0" cy="635.9" r="5.0"/><circle cx="647.9" cy="636.7" r="5.0"/><circle cx="646.4" cy="635.9" r="5.0"/><circle cx="642.3" cy="637.3" r="5.0"/><circle cx="639.5" cy="637.4" r="5.0"/><circle cx="636.0" cy="638.3" r="5.0"/><circle cx="630.0" cy="638.9" r="5.0"/><circle cx="628.4" cy="638.4" r="5.0"/><circle cx="624.6" cy="638.9" r="5.0"/><circle cx="621.3" cy="638.6" r="5.0"/><circle cx="616.4" cy="639.6" r="5.0"/><circle cx="614.1" cy="638.5" r="5.0"/><circle cx="608.2" cy="639.0" r="5.0"/><circle cx="606.9" cy="639.2" r="5.0"/><circle cx="602.7" cy="638.1" r="5.0"/><circle cx="599.5" cy="638.6" r="5.0"/><circle cx="593.5" cy="637.7" r="5.0"/><circle cx="592.8" cy="638.0" r="5.0"/><circle cx="589.0" cy="636.3" r="5.0"/><circle cx="583.9" cy="636.7" r="5.0"/><circle cx="580.8" cy="635.9" r="5.0"/><circle cx="572.3" cy="634.5" r="5.0"/><circle cx="569.1" cy="634.0" r="5.0"/><circle cx="565.4" cy="633.5" r="5.0"/><circle cx="564.3" cy="632.9" r="5.0"/><circle cx="558.5" cy="631.3" r="5.0"/><circle cx="555.0" cy="629.9" r="5.0"/><circle cx="551.6" cy="628.3" r="5.0"/><circle cx="548.7" cy="627.9" r="5.0"/><circle cx="546.5" cy="626.8" r="5.0"/><circle cx="543.0" cy="625.8" r="5.0"/><circle cx="539.4" cy="624.0" r="5.0"/><circle cx="534.9" cy="624.0" r="5.0"/><circle cx="531.3" cy="622.4" r="5.0"/><circle cx="527.4" cy="620.6" r="5.0"/><circle cx="526.1" cy="619.8" r="5.0"/><circle cx="522.9" cy="617.3" r="5.0"/><circle cx="520.3" cy="615.6" r="5.0"/><circle cx="514.6" cy="614.5" r="5.0"/><circle cx="512.2" cy="612.1" r="5.0"/><circle cx="508.4" cy="610.9" r="5.0"/><circle cx="506.2" cy="609.7" r="5.0"/><circle cx="502.9" cy="606.3" r="5.0"/><circle cx="500.2" cy="605.1" r="5.0"/><circle cx="497.3" cy="603.4" r="5.0"/><circle cx="494.7" cy="602.9" r="5.0"/><circle cx="490.9" cy="599.4" r="5.0"/><circle cx="487.3" cy="596.9" r="5.0"/><circle cx="484.6" cy="594.6" r="5.0"/><circle cx="481.3" cy="592.7" r="5.0"/><circle cx="480.9" cy="591.0" r="5.0"/><circle cx="476.2" cy="587.8" r="5.0"/><circle cx="475.3" cy="586.3" r="5.0"/><circle cx="470.1" cy="583.5" r="5.0"/><circle cx="469.3" cy="581.5" r="5.0"/><circle cx="465.5" cy="579.2" r="5.0"/><circle cx="462.7" cy="576.6" r="5.0"/><circle cx="461.8" cy="574.5" r="5.0"/><circle cx="458.6" cy="570.8" r="5.0"/><circle cx="456.8" cy="569.3" r="5.0"/><circle cx="452.6" cy="566.7" r="5.0"/><circle cx="450.7" cy="563.6" r="5.0"/><circle cx="448.2" cy="560.8" r="5.0"/><circle cx="447.6" cy="559.1" r="5.0"/><circle cx="445.7" cy="556.2" r="5.0"/><circle cx="442.8" cy="553.4" r="5.0"/><circle cx="440.4" cy="549.4" r="5.0"/><circle cx="436.7" cy="546.9" r="5.0"/><circle cx="435.5" cy="543.1" r="5.0"/><circle cx="434.7" cy="541.7" r="5.0"/><circle cx="432.1" cy="538.0" r="5.0"/><circle cx="429.5" cy="535.3" r="5.0"/><circle cx="428.1" cy="533.1" r="5.0"/><circle cx="425.5" cy="529.6" r="5.0"/><circle cx="424.4" cy="527.2" r="5.0"/><circle cx="422.4" cy="523.5" r="5.0"/><circle cx="419.8" cy="518.8" r="5.0"/><circle cx="419.2" cy="516.8" r="5.0"/><circle cx="418.8" cy="513.3" r="5.0"/><circle cx="415.9" cy="510.8" r="5.0"/><circle cx="414.3" cy="506.1" r="5.0"/><circle cx="413.4" cy="504.0" r="5.0"/><circle cx="407.6" cy="484.8" r="5.0"/><circle cx="406.2" cy="481.1" r="5.0"/><circle cx="405.0" cy="478.5" r="5.0"/><circle cx="404.4" cy="474.7" r="5.0"/><circle cx="403.6" cy="472.5" r="5.0"/><circle cx="402.5" cy="469.9" r="5.0"/><circle cx="401.7" cy="464.3" r="5.0"/><circle cx="401.2" cy="462.0" r="5.0"/><circle cx="399.7" cy="459.1" r="5.0"/><circle cx="400.1" cy="455.3" r="5.0"/><circle cx="399.2" cy="451.4" r="5.0"/><circle cx="398.1" cy="447.6" r="5.0"/><circle cx="397.4" cy="445.3" r="5.0"/><circle cx="397.2" cy="439.4" r="5.0"/><circle cx="397.8" cy="438.1" r="5.0"/><circle cx="397.2" cy="434.3" r="5.0"/><circle cx="396.8" cy="428.9" r="5.0"/><circle cx="397.4" cy="427.1" r="5.0"/><circle cx="396.6" cy="423.3" r="5.0"/><circle cx="397.0" cy="419.0" r="5.0"/><circle cx="397.2" cy="420.0" r="5.0"/><circle cx="396.8" cy="415.2" r="5.0"/><circle cx="395.8" cy="411.4" r="5.0"/><circle cx="397.5" cy="408.8" r="5.0"/><circle cx="396.5" cy="404.1" r="5.0"/><circle cx="396.7" cy="399.3" r="5.0"/><circle cx="396.8" cy="398.3" r="5.0"/><circle cx="397.2" cy="393.4" r="5.0"/><circle cx="398.7" cy="391.1" r="5.0"/><circle cx="398.1" cy="387.2" r="5.0"/><circle cx="400.1" cy="383.7" r="5.0"/><circle cx="399.3" cy="379.3" r="5.0"/><circle cx="400.1" cy="377.0" r="5.0"/><circle cx="401.4" cy="372.9" r="5.0"/><circle cx="402.9" cy="368.4" r="5.0"/><circle cx="403.1" cy="366.5" r="5.0"/><circle cx="403.1" cy="361.6" r="5.0"/><circle cx="405.1" cy="359.9" r="5.0"/><circle cx="405.7" cy="354.8" r="5.0"/><circle cx="407.8" cy="351.8" r="5.0"/><circle cx="407.8" cy="347.8" r="5.0"/><circle cx="409.8" cy="344.8" r="5.0"/><circle cx="410.6" cy="340.8" r="5.0"/><circle cx="412.8" cy="337.3" r="5.0"/><circle cx="412.8" cy="333.6" r="5.0"/><circle cx="413.9" cy="331.4" r="5.0"/><circle cx="415.1" cy="328.5" r="5.0"/><circle cx="418.2" cy="324.6" r="5.0"/><circle cx="418.0" cy="322.3" r="5.0"/><circle cx="420.6" cy="319.7" r="5.0"/><circle cx="422.1" cy="316.0" r="5.0"/><circle cx="425.0" cy="311.5" r="5.0"/><circle cx="426.5" cy="307.5" r="5.0"/><circle cx="428.2" cy="305.3" r="5.0"/><circle cx="431.1" cy="301.9" r="5.0"/><circle cx="432.0" cy="299.9" r="5.0"/><circle cx="446.5" cy="279.6" r="5.0"/><circle cx="449.3" cy="276.2" r="5.0"/><circle cx="451.5" cy="274.5" r="5.0"/><circle cx="454.6" cy="270.7" r="5.0"/><circle cx="456.8" cy="268.7" r="5.0"/><circle cx="458.6" cy="266.2" r="5.0"/><circle cx="461.3" cy="262.7" r="5.0"/><circle cx="463.4" cy="261.7" r="5.0"/><circle cx="467.6" cy="257.7" r="5.0"/><circle cx="468.4" cy="256.9" r="5.0"/><circle cx="471.6" cy="253.2" r="5.0"/><circle cx="472.7" cy="251.3" r="5.0"/><circle cx="476.5" cy="249.7" r="5.0"/><circle cx="479.5" cy="246.4" r="5.0"/><circle cx="483.6" cy="243.6" r="5.0"/><circle cx="486.1" cy="241.2" r="5.0"/><circle cx="487.3" cy="239.7" r="5.0"/><circle cx="490.6" cy="237.4" r="5.0"/><circle cx="495.8" cy="235.8" r="5.0"/><circle cx="496.5" cy="235.2" r="5.0"/><circle cx="500.0" cy="232.6" r="5.0"/><circle cx="503.9" cy="228.8" r="5.0"/><circle cx="506.6" cy="228.3" r="5.0"/><circle cx="510.1" cy="225.5" r="5.0"/><circle cx="512.7" cy="224.5" r="5.0"/><circle cx="515.6" cy="224.0" r="5.0"/><circle cx="519.3" cy="221.1" r="5.0"/><circle cx="523.3" cy="218.9" r="5.0"/><circle cx="524.5" cy="218.0" r="5.0"/><circle cx="530.4" cy="217.1" r="5.0"/><circle cx="531.4" cy="215.8" r="5.0"/><circle cx="534.8" cy="214.1" r="5.0"/><circle cx="538.8" cy="213.4" r="5.0"/><circle cx="542.9" cy="211.4" r="5.0"/><circle cx="546.7" cy="210.9" r="5.0"/><circle cx="549.0" cy="209.1" r="5.0"/><circle cx="553.4" cy="207.7" r="5.0"/><circle cx="556.3" cy="208.1" r="5.0"/><circle cx="560.1" cy="205.8" r="5.0"/><circle cx="562.0" cy="205.3" r="5.0"/><circle cx="567.2" cy="203.5" r="5.0"/><circle cx="569.9" cy="204.2" r="5.0"/><circle cx="572.5" cy="202.3" r="5.0"/><circle cx="579.7" cy="201.1" r="5.0"/><circle cx="583.7" cy="200.8" r="5.0"/><circle cx="588.5" cy="200.2" r="5.0"/><circle cx="590.6" cy="201.0" r="5.0"/><circle cx="594.3" cy="200.4" r="5.0"/><circle cx="597.5" cy="200.4" r="5.0"/><circle cx="601.9" cy="199.4" r="5.0"/><circle cx="606.0" cy="199.8" r="5.0"/><circle cx="609.5" cy="198.1" r="5.0"/><circle cx="613.5" cy="199.0" r="5.0"/><circle cx="615.5" cy="198.9" r="5.0"/><circle cx="618.6" cy="198.8" r="5.0"/><circle cx="622.7" cy="198.5" r="5.0"/><circle cx="628.7" cy="199.3" r="5.0"/><circle cx="631.9" cy="198.8" r="5.0"/><circle cx="634.9" cy="199.3" r="5.0"/><circle cx="639.5" cy="199.6" r="5.0"/><circle cx="642.4" cy="200.8" r="5.0"/><circle cx="644.4" cy="200.9" r="5.0"/><circle cx="649.2" cy="200.6" r="5.0"/><circle cx="653.5" cy="201.3" r="5.0"/><circle cx="655.0" cy="202.0" r="5.0"/><circle cx="659.3" cy="203.9" r="5.0"/><circle cx="662.3" cy="203.2" r="5.0"/><circle cx="664.8" cy="204.9" r="5.0"/><circle cx="670.4" cy="206.1" r="5.0"/><circle cx="672.4" cy="206.9" r="5.0"/><circle cx="677.4" cy="207.8" r="5.0"/><circle cx="679.2" cy="207.0" r="5.0"/><circle cx="684.8" cy="210.4" r="5.0"/><circle cx="686.5" cy="209.3" r="5.0"/><circle cx="690.6" cy="211.9" r="5.0"/><circle cx="693.6" cy="213.1" r="5.0"/><circle cx="696.7" cy="213.9" r="5.0"/><circle cx="699.2" cy="215.8" r="5.0"/><circle cx="702.6" cy="217.0" r="5.0"/><circle cx="707.9" cy="218.4" r="5.0"/><circle cx="711.2" cy="220.6" r="5.0"/><circle cx="713.5" cy="220.9" r="5.0"/><circle cx="716.2" cy="222.6" r="5.0"/><circle cx="720.7" cy="224.1" r="5.0"/><circle cx="722.1" cy="226.6" r="5.0"/><circle cx="726.4" cy="227.7" r="5.0"/><circle cx="729.1" cy="229.3" r="5.0"/><circle cx="733.7" cy="231.9" r="5.0"/><circle cx="735.5" cy="234.6" r="5.0"/><circle cx="738.9" cy="236.6" r="5.0"/><circle cx="742.7" cy="237.9" r="5.0"/><circle cx="743.4" cy="239.6" r="5.0"/><circle cx="747.9" cy="241.9" r="5.0"/><circle cx="749.3" cy="244.2" r="5.0"/><circle cx="752.4" cy="245.6" r="5.0"/><circle cx="755.6" cy="248.0" r="5.0"/><circle cx="758.4" cy="251.2" r="5.0"/><circle cx="762.1" cy="253.7" r="5.0"/><circle cx="764.2" cy="256.8" r="5.0"/><circle cx="766.1" cy="258.1" r="5.0"/><circle cx="770.1" cy="260.9" r="5.0"/><circle cx="773.0" cy="263.9" r="5.0"/><circle cx="773.8" cy="265.7" r="5.0"/><circle cx="776.8" cy="267.6" r="5.0"/><circle cx="778.5" cy="270.8" r="5.0"/><circle cx="782.9" cy="274.1" r="5.0"/><circle cx="785.4" cy="277.2" r="5.0"/><circle cx="786.6" cy="278.4" r="5.0"/><circle cx="800.8" cy="299.9" r="5.0"/><circle cx="803.1" cy="302.2" r="5.0"/><circle cx="805.6" cy="305.5" r="5.0"/><circle cx="806.9" cy="307.5" r="5.0"/><circle cx="808.0" cy="311.9" r="5.0"/><circle cx="810.1" cy="314.4" r="5.0"/><circle cx="812.1" cy="317.3" r="5.0"/><circle cx="813.5" cy="321.5" r="5.0"/><circle cx="816.1" cy="325.2" r="5.0"/><circle cx="816.6" cy="327.9" r="5.0"/><circle cx="819.6" cy="332.1" r="5.0"/><circle cx="819.5" cy="333.4" r="5.0"/><circle cx="821.2" cy="338.3" r="5.0"/><circle cx="821.5" cy="340.1" r="5.0"/><circle cx="824.9" cy="345.5" r="5.0"/><circle cx="824.2" cy="348.1" r="5.0"/><circle cx="826.0" cy="350.8" r="5.0"/><circle cx="826.5" cy="355.8" r="5.0"/><circle cx="828.5" cy="358.0" r="5.0"/><circle cx="828.2" cy="361.7" r="5.0"/><circle cx="829.5" cy="366.8" r="5.0"/><circle cx="829.8" cy="368.3" r="5.0"/><circle cx="831.8" cy="371.1" r="5.0"/><circle cx="831.3" cy="374.7" r="5.0"/><circle cx="832.4" cy="379.5" r="5.0"/><circle cx="834.0" cy="381.8" r="5.0"/><circle cx="833.6" cy="387.3" r="5.0"/><circle cx="834.4" cy="389.5" r="5.0"/><circle cx="834.3" cy="392.9" r="5.0"/><circle cx="836.2" cy="395.9" r="5.0"/><circle cx="835.4" cy="401.5" r="5.0"/><circle cx="836.8" cy="405.5" r="5.0"/><circle cx="836.2" cy="409.3" r="5.0"/><circle cx="836.5" cy="410.9" r="5.0"/></g><circle cx="616.5" cy="418.75" r="308" fill="none" stroke="#b8e040" stroke-width="1" stroke-opacity="0.35" stroke-dasharray="2 2"/><circle cx="616.5" cy="418.75" r="333" fill="none" stroke="#b8e040" stroke-width="1" stroke-opacity="0.35" stroke-dasharray="2 2"/><circle cx="616.5" cy="418.75" r="370" fill="none" stroke="#b8e040" stroke-width="1" stroke-opacity="0.35" stroke-dasharray="2 2"/><circle cx="616.5" cy="418.75" r="388" fill="none" stroke="#b8e040" stroke-width="1" stroke-opacity="0.35" stroke-dasharray="2 2"/><circle cx="616.5" cy="418.75" r="415.5" fill="none" stroke="#b8e040" stroke-width="1" stroke-opacity="0.35" stroke-dasharray="2 2"/><circle cx="616.5" cy="418.75" r="480" fill="none" stroke="#b8e040" stroke-width="1" stroke-opacity="0.35" stroke-dasharray="2 2"/><circle cx="616.5" cy="418.75" r="536" fill="none" stroke="#b8e040" stroke-width="1" stroke-opacity="0.35" stroke-dasharray="2 2"/><circle cx="616.5" cy="418.75" r="561" fill="none" stroke="#b8e040" stroke-width="1" stroke-opacity="0.35" stroke-dasharray="2 2"/><circle cx="616.5" cy="418.75" r="576" fill="none" stroke="#b8e040" stroke-width="1" stroke-opacity="0.35" stroke-dasharray="2 2"/><circle cx="616.5" cy="418.75" r="581" fill="none" stroke="#b8e040" stroke-width="1" stroke-opacity="0.35" stroke-dasharray="2 2"/><circle cx="616.5" cy="418.75" r="637" fill="none" stroke="#b8e040" stroke-width="1" stroke-opacity="0.35" stroke-dasharray="2 2"/><g stroke="#000" stroke-width="1.6"><path d="M645.5 201.5H659.5M652.5 194.5V208.5"/><path d="M307.4 355.7H321.4M314.4 348.7V362.7"/><path d="M333.4 232.3H347.4M340.4 225.3V239.3"/><path d="M848.3 137.5H862.3M855.3 130.5V144.5"/><path d="M387.2 736.7H401.2M394.2 729.7V743.7"/><path d="M340.8 101.2H354.8M347.8 94.2V108.2"/><path d="M210.2 839.7H224.2M217.2 832.7V846.7"/><path d="M250.3 870.6H264.3M257.3 863.6V877.6"/><path d="M358.8 891.9H372.8M365.8 884.9V898.9"/><path d="M563.6 895.7H577.6M570.6 888.7V902.7"/><path d="M950.0 862.5H964.0M957.0 855.5V869.5"/><path d="M185.0 895.5H199.0M192.0 888.5V902.5"/></g><g font-family="Liberation Sans" font-size="14" fill="#000"><text x="661.5" y="211.5">a</text><text x="323.4" y="365.7">b</text><text x="349.4" y="242.3">c</text><text x="864.3" y="147.5">d</text><text x="403.2" y="746.7">e</text><text x="356.8" y="111.2">f</text><text x="226.2" y="849.7">k</text><text x="266.3" y="880.6">j</text><text x="374.8" y="901.9">h</text><text x="579.6" y="905.7">g</text><text x="966.0" y="872.5">i</text><text x="201.0" y="905.5">l</text></g></svg>
<div class="t" style="left:191px;top:906px;font-size:14px;line-height:16px;color:#2e3436;font-weight:bold;color:#000">X:</div>

<div class="t" style="left:211px;top:905px;font-size:15px;line-height:17px;color:#000;letter-spacing:1.3px">2031.445</div>

<div class="t" style="left:358px;top:906px;font-size:14px;line-height:16px;color:#2e3436;font-weight:bold;color:#000">Y:</div>

<div class="t" style="left:377px;top:905px;font-size:15px;line-height:17px;color:#000;letter-spacing:1.3px">112.5019</div>

<div class="t" style="left:523px;top:906px;font-size:14px;line-height:16px;color:#2e3436;font-weight:bold;color:#000">Value:</div>

<div class="t" style="left:572px;top:905px;font-size:15px;line-height:17px;color:#000;">3</div>

<div class="t" style="left:972px;top:52px;font-size:15px;line-height:17px;color:#000;">Help</div>

<div class="gb" style="left:973px;top:73px;width:393px;height:194px"></div>
<div class="t" style="left:985px;top:87px;font-size:15px;line-height:17px;color:#000;">Identify rings from the image.</div>

<div class="t" style="left:985px;top:120px;font-size:15px;line-height:17px;color:#000;">Click on the ring you want to select. Usually it is the</div>

<div class="t" style="left:985px;top:141px;font-size:15px;line-height:17px;color:#000;">first one, else update it&#39;s number in the list of the picked</div>

<div class="t" style="left:985px;top:162px;font-size:15px;line-height:17px;color:#000;">rings bellow.</div>

<div class="t" style="left:985px;top:195px;font-size:15px;line-height:17px;color:#000;">You have to identify at least 5 peaks distributed on 2</div>

<div class="t" style="left:985px;top:216px;font-size:15px;line-height:17px;color:#000;">rings. Then use the extraction tool to find more peaks</div>

<div class="t" style="left:985px;top:237px;font-size:15px;line-height:17px;color:#000;">automatically.</div>

<div class="t" style="left:972px;top:277px;font-size:15px;line-height:17px;color:#000;">Picked rings</div>

<div class="gb" style="left:973px;top:298px;width:393px;height:428px"></div>
<div class="t" style="left:972px;top:737px;font-size:15px;line-height:17px;color:#000;">Auto-extraction options</div>

<div class="gb" style="left:973px;top:758px;width:393px;height:123px"></div>
<div class="t" style="left:984px;top:777px;font-size:15px;line-height:17px;color:#000;letter-spacing:0.15px">Amount of ring to extract</div>

<div class="t" style="left:984px;top:813px;font-size:15px;line-height:17px;color:#000;letter-spacing:-0.1px">Number of peak per degree:</div>

<div class="t" style="left:984px;top:849px;font-size:15px;line-height:17px;color:#000;">Guess geometry from:</div>

<svg class="a" style="left:992px;top:316px" width="24" height="23" viewBox="0 0 24 23">
<defs><linearGradient id="fo" x1="0" y1="0" x2="1" y2="1"><stop offset="0" stop-color="#fbb868"/><stop offset="1" stop-color="#e8781a"/></linearGradient>
<linearGradient id="fb" x1="0" y1="0" x2="1" y2="0"><stop offset="0" stop-color="#d8d8d8"/><stop offset="1" stop-color="#505050"/></linearGradient></defs>
<path d="M1 9L14 7L14 20L5 21Z" fill="url(#fb)"/>
<path d="M5 10L23 8L19 20L5 22Z" fill="url(#fo)"/>
<path d="M8 5C11 1 17 1 20 5" fill="none" stroke="#1aa34a" stroke-width="2"/><path d="M17 4L22 3L21 8Z" fill="#1aa34a"/>
</svg><svg class="a" style="left:1029px;top:320px" width="17" height="18" viewBox="0 0 17 18">
<path d="M0 0H13L17 4V18H0Z" fill="#000"/><rect x="2" y="9" width="13" height="7" fill="#fff"/><rect x="7" y="1" width="2" height="3" fill="#fff"/>
</svg><div class="a" style="left:1058px;top:319px;width:1px;height:19px;background:#d0d0d0"></div><svg class="a" style="left:1065px;top:318px" width="24" height="19" viewBox="0 0 24 19">
<path d="M9 2L2 8L9 14V10.5H15C18 10.5 19 12.5 19 14C19 16 17 17 15 17H13V18.5H15.5C19.5 18.5 22.5 16.5 22.5 13C22.5 9.5 19.5 6.5 15.5 6.5H9Z" fill="#f7e358" stroke="#c9a400" stroke-width="1.2" stroke-linejoin="round"/>
</svg><svg class="a" style="left:1098px;top:318px" width="24" height="19" viewBox="0 0 24 19">
<path d="M15 2L22 8L15 14V10.5H9C6 10.5 5 12.5 5 14C5 16 7 17 9 17H11V18.5H8.5C4.5 18.5 1.5 16.5 1.5 13C1.5 9.5 4.5 6.5 8.5 6.5H15Z" fill="#eeeeee" stroke="#a8a8a8" stroke-width="1.2" stroke-linejoin="round"/>
</svg><svg class="a" style="left:993px;top:361px" width="24" height="25" viewBox="0 0 24 25">
<path d="M1 4C5 1 12 1 17 3C23 7 23 17 17 21C12 24 5 24 1 21" fill="none" stroke="#000" stroke-width="1.2"/>
<g fill="#f7941d"><rect x="3" y="1" width="4" height="4"/><rect x="9" y="1" width="4" height="4"/><rect x="17" y="5" width="4" height="4"/><rect x="14" y="18" width="4" height="4"/><rect x="7" y="20" width="4" height="4"/></g>
</svg><svg class="a" style="left:1026px;top:361px" width="22" height="24" viewBox="0 0 22 24">
<path d="M1 1C9 3 16 10 19 23" fill="none" stroke="#000" stroke-width="1.2"/>
<g fill="#f7941d"><rect x="4" y="1" width="4" height="4"/><rect x="9" y="5" width="4" height="4"/><rect x="12" y="8" width="4" height="4"/><rect x="14" y="11" width="4" height="4"/><rect x="16" y="17" width="4" height="4"/></g>
</svg><div class="a" style="left:1054px;top:358px;width:32px;height:31px;background:#dcdcdc;border:1px solid #a9a9a9;border-radius:3px"></div><svg class="a" style="left:1058px;top:361px" width="24" height="24" viewBox="0 0 24 24">
<path d="M2 1C11 3 18 10 21 23" fill="none" stroke="#000" stroke-width="1.2"/>
<rect x="13" y="8" width="4" height="4" fill="#f7941d"/>
</svg><div class="a" style="left:1090px;top:364px;width:1px;height:19px;background:#d0d0d0"></div><svg class="a" style="left:1103px;top:361px" width="14" height="24" viewBox="0 0 14 24">
<defs><linearGradient id="br" x1="0" y1="0" x2="1" y2="1"><stop offset="0" stop-color="#ff8a00"/><stop offset="1" stop-color="#ffd800"/></linearGradient></defs>
<path d="M4 1L7 1L8 11L5 11Z" fill="#555"/><path d="M2 12L10 11L11 18L3 19Z" fill="#222"/><path d="M3 17L11 16L12 21L4 23Z" fill="url(#br)"/>
</svg><svg class="a" style="left:1135px;top:364px" width="18" height="17" viewBox="0 0 18 17">
<defs><linearGradient id="er" x1="0" y1="0" x2="1" y2="0"><stop offset="0" stop-color="#f0f0f0"/><stop offset="1" stop-color="#000"/></linearGradient></defs>
<path d="M11 1L16 5L8 14L3 10Z" fill="url(#er)"/><path d="M3 10L8 14L6 16L3 16L1 13Z" fill="#fff" stroke="#bbb" stroke-width="0.8"/>
</svg><div class="a" style="left:1164px;top:364px;width:1px;height:19px;background:#d0d0d0"></div><svg class="a" style="left:1176px;top:366px" width="14" height="14"><path d="M7 0V14M0 7H14" stroke="#16a34a" stroke-width="2.6"/></svg><div class="spin" style="left:1200px;top:359px;width:72px;height:28px"></div><div class="a" style="left:1257px;top:360px;width:1px;height:26px;background:#c8c8c8"></div><div class="a" style="left:1258px;top:360px;width:13px;height:26px;background:linear-gradient(#fafafa,#efefef);border-radius:0 2px 2px 0"></div><svg class="a" style="left:1259.5px;top:365.0px" width="10" height="16"><path d="M1 4.5L5 1L9 4.5Z M1 11.5L5 15L9 11.5Z" fill="#555"/></svg><div class="t" style="left:1206px;top:366px;font-size:15px;line-height:17px;color:#000;">9</div>
<div class="a" style="left:984px;top:399px;width:370px;height:270px;background:#ececec;border-left:1px solid #a8a8a8;border-top:1px solid #a8a8a8"></div><div class="a" style="left:985px;top:400px;width:354px;height:24px;background:linear-gradient(#fdfdfd,#ececec);border-bottom:1px solid #b4b4b4"></div><div class="a" style="left:1003px;top:401px;width:1px;height:23px;background:#cdcdcd"></div><div class="a" style="left:1144px;top:401px;width:1px;height:23px;background:#cdcdcd"></div><div class="a" style="left:1188px;top:401px;width:1px;height:23px;background:#cdcdcd"></div><div class="a" style="left:1277px;top:401px;width:1px;height:23px;background:#cdcdcd"></div><div class="t" style="left:1056px;top:406px;font-size:14px;line-height:16px;color:#000;">Name</div>
<div class="t" style="left:1147px;top:406px;font-size:14px;line-height:16px;color:#000;">Peaks</div>
<div class="t" style="left:1192px;top:406px;font-size:14px;line-height:16px;color:#000;">Ring number</div>
<div class="a" style="left:1339px;top:400px;width:15px;height:269px;background:#f4f4f4;border-left:1px solid #c9c9c9"></div><div class="a" style="left:1340px;top:400px;width:13px;height:13px;background:linear-gradient(#fafafa,#f0f0f0);border-bottom:1px solid #cfcfcf"></div><svg class="a" style="left:1341px;top:403px" width="10" height="6"><path d="M1 5L5 1L9 5Z" fill="#555"/></svg><div class="a" style="left:1340px;top:414px;width:13px;height:78px;background:#e3e3e3;border-bottom:1px solid #d0d0d0"></div><div class="a" style="left:1340px;top:654px;width:13px;height:14px;background:linear-gradient(#f6f6f6,#f0f0f0);border-top:1px solid #cfcfcf"></div><svg class="a" style="left:1341px;top:658px" width="10" height="6"><path d="M1 1L5 5L9 1Z" fill="#555"/></svg><div class="a" style="left:1190px;top:424px;width:87px;height:3px;background:#fff;border:1px solid #b8b8b8;border-top:none;border-radius:0 0 3px 3px"></div><div class="a" style="left:1263px;top:424px;width:1px;height:2px;background:#c8c8c8"></div><div class="a" style="left:987px;top:435px;width:14px;height:14px;background:#ea4c10;border:1px solid #b9b9b9"></div><svg class="a" style="left:988px;top:436px" width="12" height="12"><path d="M2.5 5.5L5 9.5L10 1.5" fill="none" stroke="#000" stroke-width="2"/></svg><div class="t" style="left:1007px;top:436px;font-size:15px;line-height:17px;color:#000;">e</div>
<div class="t" style="left:1148px;top:436px;font-size:15px;line-height:17px;color:#000;letter-spacing:1px">240</div>
<div class="spin" style="left:1189px;top:430px;width:88px;height:27px"></div><div class="a" style="left:1263px;top:431px;width:1px;height:25px;background:#c8c8c8"></div><div class="a" style="left:1264px;top:431px;width:12px;height:25px;background:linear-gradient(#fafafa,#efefef);border-radius:0 2px 2px 0"></div><svg class="a" style="left:1265.0px;top:435.5px" width="10" height="16"><path d="M1 4.5L5 1L9 4.5Z M1 11.5L5 15L9 11.5Z" fill="#555"/></svg><div class="t" style="left:1195px;top:436px;font-size:15px;line-height:17px;color:#000;letter-spacing:1px">5</div>
<svg class="a" style="left:1284px;top:433px" width="20" height="20" viewBox="0 0 20 20">
<path d="M3.5 8.5A7 7 0 0 1 16 6" fill="none" stroke="#16a34a" stroke-width="2.8"/><path d="M19.5 4L17.5 10.5L12.5 6.5Z" fill="#16a34a"/>
<path d="M16.5 11.5A7 7 0 0 1 4 14" fill="none" stroke="#f7941d" stroke-width="2.8"/><path d="M0.5 16L2.5 9.5L7.5 13.5Z" fill="#f7941d"/>
</svg><svg class="a" style="left:1314px;top:434px" width="18" height="18" viewBox="0 0 18 18">
<rect x="0.5" y="0.5" width="17" height="17" rx="3.5" fill="#a80000"/><path d="M5 5L13 13M13 5L5 13" stroke="#fff" stroke-width="3"/>
</svg><div class="a" style="left:987px;top:465px;width:14px;height:14px;background:#19b4e8;border:1px solid #b9b9b9"></div><svg class="a" style="left:988px;top:466px" width="12" height="12"><path d="M2.5 5.5L5 9.5L10 1.5" fill="none" stroke="#000" stroke-width="2"/></svg><div class="t" style="left:1007px;top:466px;font-size:15px;line-height:17px;color:#000;">f</div>
<div class="t" style="left:1148px;top:466px;font-size:15px;line-height:17px;color:#000;letter-spacing:1px">215</div>
<div class="spin" style="left:1189px;top:460px;width:88px;height:27px"></div><div class="a" style="left:1263px;top:461px;width:1px;height:25px;background:#c8c8c8"></div><div class="a" style="left:1264px;top:461px;width:12px;height:25px;background:linear-gradient(#fafafa,#efefef);border-radius:0 2px 2px 0"></div><svg class="a" style="left:1265.0px;top:465.5px" width="10" height="16"><path d="M1 4.5L5 1L9 4.5Z M1 11.5L5 15L9 11.5Z" fill="#555"/></svg><div class="t" style="left:1195px;top:466px;font-size:15px;line-height:17px;color:#000;letter-spacing:1px">6</div>
<svg class="a" style="left:1284px;top:463px" width="20" height="20" viewBox="0 0 20 20">
<path d="M3.5 8.5A7 7 0 0 1 16 6" fill="none" stroke="#16a34a" stroke-width="2.8"/><path d="M19.5 4L17.5 10.5L12.5 6.5Z" fill="#16a34a"/>
<path d="M16.5 11.5A7 7 0 0 1 4 14" fill="none" stroke="#f7941d" stroke-width="2.8"/><path d="M0.5 16L2.5 9.5L7.5 13.5Z" fill="#f7941d"/>
</svg><svg class="a" style="left:1314px;top:464px" width="18" height="18" viewBox="0 0 18 18">
<rect x="0.5" y="0.5" width="17" height="17" rx="3.5" fill="#a80000"/><path d="M5 5L13 13M13 5L5 13" stroke="#fff" stroke-width="3"/>
</svg><div class="a" style="left:987px;top:495px;width:14px;height:14px;background:#e4520e;border:1px solid #b9b9b9"></div><svg class="a" style="left:988px;top:496px" width="12" height="12"><path d="M2.5 5.5L5 9.5L10 1.5" fill="none" stroke="#000" stroke-width="2"/></svg><div class="t" style="left:1007px;top:496px;font-size:15px;line-height:17px;color:#000;">g</div>
<div class="t" style="left:1148px;top:496px;font-size:15px;line-height:17px;color:#000;letter-spacing:1px">118</div>
<div class="spin" style="left:1189px;top:490px;width:88px;height:27px"></div><div class="a" style="left:1263px;top:491px;width:1px;height:25px;background:#c8c8c8"></div><div class="a" style="left:1264px;top:491px;width:12px;height:25px;background:linear-gradient(#fafafa,#efefef);border-radius:0 2px 2px 0"></div><svg class="a" style="left:1265.0px;top:495.5px" width="10" height="16"><path d="M1 4.5L5 1L9 4.5Z M1 11.5L5 15L9 11.5Z" fill="#555"/></svg><div class="t" style="left:1195px;top:496px;font-size:15px;line-height:17px;color:#000;letter-spacing:1px">7</div>
<svg class="a" style="left:1284px;top:493px" width="20" height="20" viewBox="0 0 20 20">
<path d="M3.5 8.5A7 7 0 0 1 16 6" fill="none" stroke="#16a34a" stroke-width="2.8"/><path d="M19.5 4L17.5 10.5L12.5 6.5Z" fill="#16a34a"/>
<path d="M16.5 11.5A7 7 0 0 1 4 14" fill="none" stroke="#f7941d" stroke-width="2.8"/><path d="M0.5 16L2.5 9.5L7.5 13.5Z" fill="#f7941d"/>
</svg><svg class="a" style="left:1314px;top:494px" width="18" height="18" viewBox="0 0 18 18">
<rect x="0.5" y="0.5" width="17" height="17" rx="3.5" fill="#a80000"/><path d="M5 5L13 13M13 5L5 13" stroke="#fff" stroke-width="3"/>
</svg><div class="a" style="left:987px;top:525px;width:14px;height:14px;background:#14d0f0;border:1px solid #b9b9b9"></div><svg class="a" style="left:988px;top:526px" width="12" height="12"><path d="M2.5 5.5L5 9.5L10 1.5" fill="none" stroke="#000" stroke-width="2"/></svg><div class="t" style="left:1007px;top:526px;font-size:15px;line-height:17px;color:#000;">h</div>
<div class="t" style="left:1148px;top:526px;font-size:15px;line-height:17px;color:#000;letter-spacing:1px">45</div>
<div class="spin" style="left:1189px;top:520px;width:88px;height:27px"></div><div class="a" style="left:1263px;top:521px;width:1px;height:25px;background:#c8c8c8"></div><div class="a" style="left:1264px;top:521px;width:12px;height:25px;background:linear-gradient(#fafafa,#efefef);border-radius:0 2px 2px 0"></div><svg class="a" style="left:1265.0px;top:525.5px" width="10" height="16"><path d="M1 4.5L5 1L9 4.5Z M1 11.5L5 15L9 11.5Z" fill="#555"/></svg><div class="t" style="left:1195px;top:526px;font-size:15px;line-height:17px;color:#000;letter-spacing:1px">8</div>
<svg class="a" style="left:1284px;top:523px" width="20" height="20" viewBox="0 0 20 20">
<path d="M3.5 8.5A7 7 0 0 1 16 6" fill="none" stroke="#16a34a" stroke-width="2.8"/><path d="M19.5 4L17.5 10.5L12.5 6.5Z" fill="#16a34a"/>
<path d="M16.5 11.5A7 7 0 0 1 4 14" fill="none" stroke="#f7941d" stroke-width="2.8"/><path d="M0.5 16L2.5 9.5L7.5 13.5Z" fill="#f7941d"/>
</svg><svg class="a" style="left:1314px;top:524px" width="18" height="18" viewBox="0 0 18 18">
<rect x="0.5" y="0.5" width="17" height="17" rx="3.5" fill="#a80000"/><path d="M5 5L13 13M13 5L5 13" stroke="#fff" stroke-width="3"/>
</svg><div class="a" style="left:987px;top:555px;width:14px;height:14px;background:#dc6212;border:1px solid #b9b9b9"></div><svg class="a" style="left:988px;top:556px" width="12" height="12"><path d="M2.5 5.5L5 9.5L10 1.5" fill="none" stroke="#000" stroke-width="2"/></svg><div class="t" style="left:1007px;top:556px;font-size:15px;line-height:17px;color:#000;">i</div>
<div class="t" style="left:1148px;top:556px;font-size:15px;line-height:17px;color:#000;letter-spacing:1px">34</div>
<div class="spin" style="left:1189px;top:550px;width:88px;height:27px"></div><div class="a" style="left:1263px;top:551px;width:1px;height:25px;background:#c8c8c8"></div><div class="a" style="left:1264px;top:551px;width:12px;height:25px;background:linear-gradient(#fafafa,#efefef);border-radius:0 2px 2px 0"></div><svg class="a" style="left:1265.0px;top:555.5px" width="10" height="16"><path d="M1 4.5L5 1L9 4.5Z M1 11.5L5 15L9 11.5Z" fill="#555"/></svg><div class="t" style="left:1195px;top:556px;font-size:15px;line-height:17px;color:#000;letter-spacing:1px">9</div>
<svg class="a" style="left:1284px;top:553px" width="20" height="20" viewBox="0 0 20 20">
<path d="M3.5 8.5A7 7 0 0 1 16 6" fill="none" stroke="#16a34a" stroke-width="2.8"/><path d="M19.5 4L17.5 10.5L12.5 6.5Z" fill="#16a34a"/>
<path d="M16.5 11.5A7 7 0 0 1 4 14" fill="none" stroke="#f7941d" stroke-width="2.8"/><path d="M0.5 16L2.5 9.5L7.5 13.5Z" fill="#f7941d"/>
</svg><svg class="a" style="left:1314px;top:554px" width="18" height="18" viewBox="0 0 18 18">
<rect x="0.5" y="0.5" width="17" height="17" rx="3.5" fill="#a80000"/><path d="M5 5L13 13M13 5L5 13" stroke="#fff" stroke-width="3"/>
</svg><div class="a" style="left:987px;top:585px;width:14px;height:14px;background:#12ecfc;border:1px solid #b9b9b9"></div><svg class="a" style="left:988px;top:586px" width="12" height="12"><path d="M2.5 5.5L5 9.5L10 1.5" fill="none" stroke="#000" stroke-width="2"/></svg><div class="t" style="left:1007px;top:586px;font-size:15px;line-height:17px;color:#000;">j</div>
<div class="t" style="left:1148px;top:586px;font-size:15px;line-height:17px;color:#000;letter-spacing:1px">24</div>
<div class="spin" style="left:1189px;top:580px;width:88px;height:27px"></div><div class="a" style="left:1263px;top:581px;width:1px;height:25px;background:#c8c8c8"></div><div class="a" style="left:1264px;top:581px;width:12px;height:25px;background:linear-gradient(#fafafa,#efefef);border-radius:0 2px 2px 0"></div><svg class="a" style="left:1265.0px;top:585.5px" width="10" height="16"><path d="M1 4.5L5 1L9 4.5Z M1 11.5L5 15L9 11.5Z" fill="#555"/></svg><div class="t" style="left:1195px;top:586px;font-size:15px;line-height:17px;color:#000;letter-spacing:1px">10</div>
<svg class="a" style="left:1284px;top:583px" width="20" height="20" viewBox="0 0 20 20">
<path d="M3.5 8.5A7 7 0 0 1 16 6" fill="none" stroke="#16a34a" stroke-width="2.8"/><path d="M19.5 4L17.5 10.5L12.5 6.5Z" fill="#16a34a"/>
<path d="M16.5 11.5A7 7 0 0 1 4 14" fill="none" stroke="#f7941d" stroke-width="2.8"/><path d="M0.5 16L2.5 9.5L7.5 13.5Z" fill="#f7941d"/>
</svg><svg class="a" style="left:1314px;top:584px" width="18" height="18" viewBox="0 0 18 18">
<rect x="0.5" y="0.5" width="17" height="17" rx="3.5" fill="#a80000"/><path d="M5 5L13 13M13 5L5 13" stroke="#fff" stroke-width="3"/>
</svg><div class="a" style="left:987px;top:615px;width:14px;height:14px;background:#fc2410;border:1px solid #b9b9b9"></div><svg class="a" style="left:988px;top:616px" width="12" height="12"><path d="M2.5 5.5L5 9.5L10 1.5" fill="none" stroke="#000" stroke-width="2"/></svg><div class="t" style="left:1007px;top:616px;font-size:15px;line-height:17px;color:#000;">k</div>
<div class="t" style="left:1148px;top:616px;font-size:15px;line-height:17px;color:#000;letter-spacing:1px">23</div>
<div class="spin" style="left:1189px;top:610px;width:88px;height:27px"></div><div class="a" style="left:1263px;top:611px;width:1px;height:25px;background:#c8c8c8"></div><div class="a" style="left:1264px;top:611px;width:12px;height:25px;background:linear-gradient(#fafafa,#efefef);border-radius:0 2px 2px 0"></div><svg class="a" style="left:1265.0px;top:615.5px" width="10" height="16"><path d="M1 4.5L5 1L9 4.5Z M1 11.5L5 15L9 11.5Z" fill="#555"/></svg><div class="t" style="left:1195px;top:616px;font-size:15px;line-height:17px;color:#000;letter-spacing:1px">11</div>
<svg class="a" style="left:1284px;top:613px" width="20" height="20" viewBox="0 0 20 20">
<path d="M3.5 8.5A7 7 0 0 1 16 6" fill="none" stroke="#16a34a" stroke-width="2.8"/><path d="M19.5 4L17.5 10.5L12.5 6.5Z" fill="#16a34a"/>
<path d="M16.5 11.5A7 7 0 0 1 4 14" fill="none" stroke="#f7941d" stroke-width="2.8"/><path d="M0.5 16L2.5 9.5L7.5 13.5Z" fill="#f7941d"/>
</svg><svg class="a" style="left:1314px;top:614px" width="18" height="18" viewBox="0 0 18 18">
<rect x="0.5" y="0.5" width="17" height="17" rx="3.5" fill="#a80000"/><path d="M5 5L13 13M13 5L5 13" stroke="#fff" stroke-width="3"/>
</svg><div class="a" style="left:987px;top:645px;width:14px;height:14px;background:#1492e0;border:1px solid #b9b9b9"></div><svg class="a" style="left:988px;top:646px" width="12" height="12"><path d="M2.5 5.5L5 9.5L10 1.5" fill="none" stroke="#000" stroke-width="2"/></svg><div class="t" style="left:1007px;top:646px;font-size:15px;line-height:17px;color:#000;">l</div>
<div class="t" style="left:1148px;top:646px;font-size:15px;line-height:17px;color:#000;letter-spacing:1px">1</div>
<div class="spin" style="left:1189px;top:640px;width:88px;height:27px"></div><div class="a" style="left:1263px;top:641px;width:1px;height:25px;background:#c8c8c8"></div><div class="a" style="left:1264px;top:641px;width:12px;height:25px;background:linear-gradient(#fafafa,#efefef);border-radius:0 2px 2px 0"></div><svg class="a" style="left:1265.0px;top:645.5px" width="10" height="16"><path d="M1 4.5L5 1L9 4.5Z M1 11.5L5 15L9 11.5Z" fill="#555"/></svg><div class="t" style="left:1195px;top:646px;font-size:15px;line-height:17px;color:#000;letter-spacing:1px">12</div>
<svg class="a" style="left:1284px;top:643px" width="20" height="20" viewBox="0 0 20 20">
<path d="M3.5 8.5A7 7 0 0 1 16 6" fill="none" stroke="#16a34a" stroke-width="2.8"/><path d="M19.5 4L17.5 10.5L12.5 6.5Z" fill="#16a34a"/>
<path d="M16.5 11.5A7 7 0 0 1 4 14" fill="none" stroke="#f7941d" stroke-width="2.8"/><path d="M0.5 16L2.5 9.5L7.5 13.5Z" fill="#f7941d"/>
</svg><svg class="a" style="left:1314px;top:644px" width="18" height="18" viewBox="0 0 18 18">
<rect x="0.5" y="0.5" width="17" height="17" rx="3.5" fill="#a80000"/><path d="M5 5L13 13M13 5L5 13" stroke="#fff" stroke-width="3"/>
</svg><div class="a" style="left:984px;top:675px;width:358px;height:40px;border:1px solid #a9a9a9;border-radius:4px;background:linear-gradient(#fefefe,#ececec)"></div><div class="a" style="left:1342px;top:675px;width:12px;height:40px;border:1px solid #a9a9a9;border-radius:4px;background:linear-gradient(#fefefe,#ececec)"></div><svg class="a" style="left:1344px;top:692px" width="9" height="6"><path d="M0.5 1L4.5 5L8.5 1Z" fill="#555"/></svg><svg class="a" style="left:989px;top:689px" width="17" height="15" viewBox="0 0 17 15">
<path d="M1 7C4 2 12 2 15 7C12 12 4 12 1 7Z" fill="none" stroke="#000" stroke-width="1.3"/><circle cx="8" cy="6.5" r="2.8" fill="#000"/><circle cx="7" cy="5.5" r="0.9" fill="#fff"/>
<path d="M11 11A2.5 2.5 0 0 1 16 10" fill="none" stroke="#16a34a" stroke-width="1.5"/><path d="M16 11A2.5 2.5 0 0 1 11 12" fill="none" stroke="#f7941d" stroke-width="1.5"/>
</svg><div class="t" style="left:1009px;top:688px;font-size:15px;line-height:17px;color:#000;">Extract all reachable rings</div>
<div class="spin" style="left:1177px;top:770px;width:177px;height:28px"></div><div class="a" style="left:1339px;top:771px;width:1px;height:26px;background:#c8c8c8"></div><div class="a" style="left:1340px;top:771px;width:13px;height:26px;background:linear-gradient(#fafafa,#efefef);border-radius:0 2px 2px 0"></div><svg class="a" style="left:1341px;top:776.0px" width="11" height="16"><path d="M1.5 4.5L5.5 1L9.5 4.5Z M1.5 11.5L5.5 15L9.5 11.5Z" fill="#555"/></svg><div class="t" style="left:1324px;top:778px;font-size:15px;line-height:17px;color:#000;">5</div>
<div class="spin" style="left:1177px;top:806px;width:177px;height:28px"></div><div class="a" style="left:1339px;top:807px;width:1px;height:26px;background:#c8c8c8"></div><div class="a" style="left:1340px;top:807px;width:13px;height:26px;background:linear-gradient(#fafafa,#efefef);border-radius:0 2px 2px 0"></div><svg class="a" style="left:1341px;top:812.0px" width="11" height="16"><path d="M1.5 4.5L5.5 1L9.5 4.5Z M1.5 11.5L5.5 15L9.5 11.5Z" fill="#555"/></svg><div class="t" style="left:1302px;top:814px;font-size:15px;line-height:17px;color:#000;letter-spacing:1px">1.00</div>
<div class="a" style="left:1177px;top:841px;width:177px;height:29px;border:1px solid #a9a9a9;border-radius:3px;background:linear-gradient(#fefefe,#ececec)"></div><div class="t" style="left:1182px;top:849px;font-size:15px;line-height:17px;color:#000;">Control points</div>
<svg class="a" style="left:1337px;top:853px" width="10" height="6"><path d="M1 1L5 5L9 1Z" fill="#555"/></svg>
<div class="a" style="left:972px;top:888px;width:394px;height:40px;border:1px solid #a9a9a9;border-radius:4px;background:linear-gradient(#fefefe,#ececec)"></div>
<div class="t" style="left:1146px;top:901px;font-size:15px;line-height:17px;color:#000;">Next &gt;</div>

</body></html>
